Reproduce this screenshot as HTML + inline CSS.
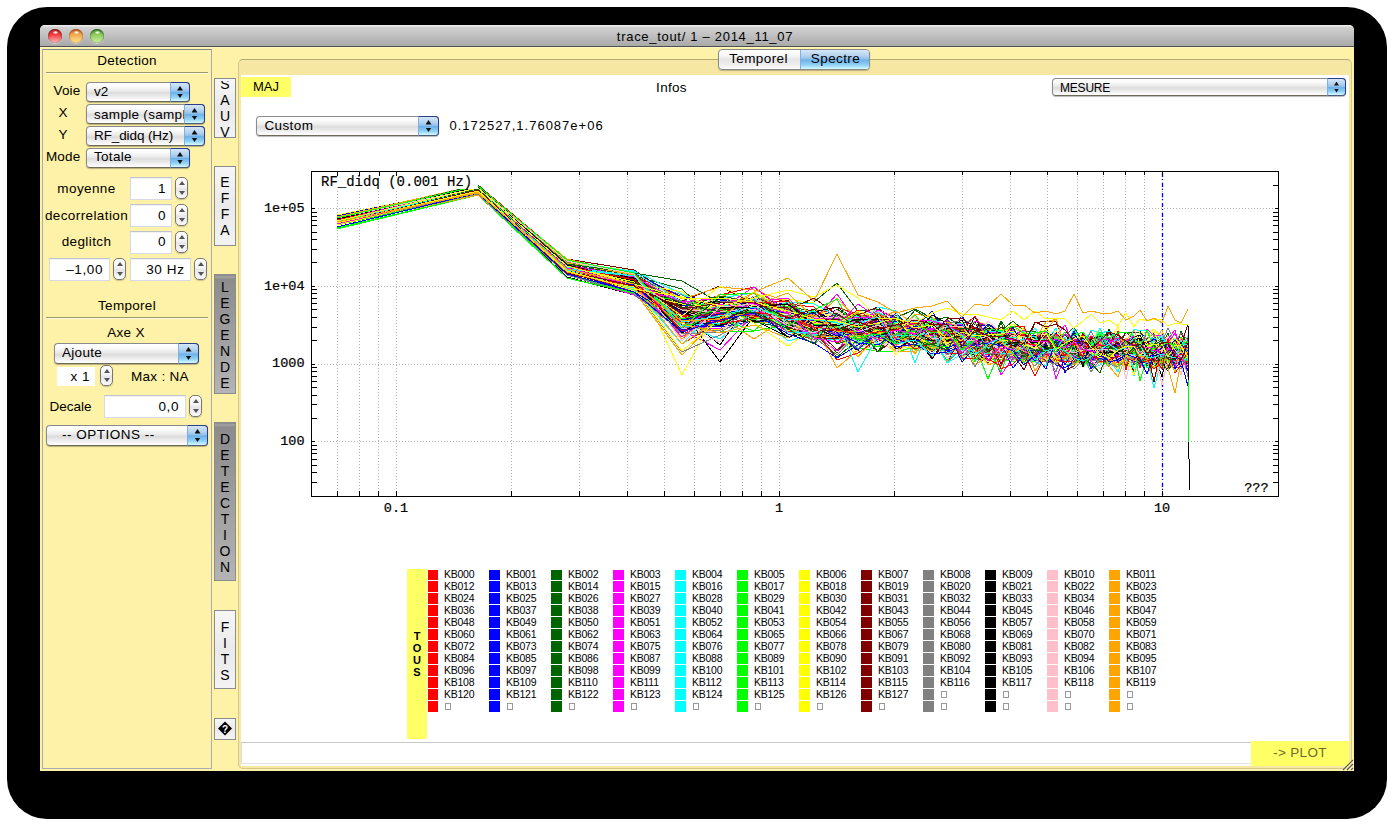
<!DOCTYPE html><html><head><meta charset="utf-8"><style>
*{margin:0;padding:0;box-sizing:border-box}
html,body{width:1394px;height:826px;overflow:hidden;background:#fff;font-family:"Liberation Sans",sans-serif;color:#000}
.a{position:absolute}
.t{position:absolute;white-space:nowrap;line-height:1}
.pop{position:absolute;border:1px solid #8a8a8a;border-bottom-color:#6e6a5a;border-radius:4px;
 background:linear-gradient(#ffffff 0%,#fbfbfb 20%,#e9e9e9 45%,#dcdcdc 55%,#ececec 75%,#ffffff 100%);
 box-shadow:0 1px 1px rgba(0,0,0,.28)}
.bl{position:absolute;top:-1px;right:-1px;bottom:-1px;border:1px solid #2b3e8c;border-bottom-color:#4f5a80;border-left:1px solid #7fb0e0;border-radius:0 4px 4px 0;
 background:linear-gradient(#d6e6f6 0%,#b4d3f0 30%,#8ec0ec 48%,#6cb0e8 52%,#8fd0f6 78%,#d6fbff 100%)}
.bl:before{content:"";position:absolute;left:50%;margin-left:-3px;top:3px;width:6px;height:4.5px;background:#111;clip-path:polygon(50% 0,100% 100%,0 100%)}
.bl:after{content:"";position:absolute;left:50%;margin-left:-3px;bottom:3px;width:6px;height:4.5px;background:#111;clip-path:polygon(0 0,100% 0,50% 100%)}
.sm .bl:before{top:2.5px;width:5px;height:4px;margin-left:-2.5px}
.sm .bl:after{bottom:2.5px;width:5px;height:4px;margin-left:-2.5px}
.tf{position:absolute;background:#fff;border:1px solid #d6dae6;border-top-color:#bfc3ce;box-shadow:inset 0 1px 0 rgba(0,0,0,.05)}
.st{position:absolute;width:13px;border:1px solid #777;border-radius:5px;background:linear-gradient(#fff,#f3f3f3 45%,#e6e6e6 55%,#fafafa);box-shadow:0 1px 1px rgba(0,0,0,.2)}
.st:before{content:"";position:absolute;left:2.5px;top:3px;border-left:3px solid transparent;border-right:3px solid transparent;border-bottom:4px solid #555}
.st:after{content:"";position:absolute;left:2.5px;bottom:3px;border-left:3px solid transparent;border-right:3px solid transparent;border-top:4px solid #555}
.vb{position:absolute;left:214px;width:22px;border:1px solid #8c8c8c;background:linear-gradient(#f6f6f6,#eaeaea 50%,#f3f3f3);overflow:hidden}
.vb.dk{background:linear-gradient(#888 0px,#a4a4a4 2px,#8c8c8c 4px,#969696 30%,#b4b4b4 100%)}
.vl{position:absolute;left:0;width:20px;text-align:center;font-size:14px;line-height:1}
.sw{position:absolute;width:10px;height:11px}
.lb{position:absolute;font-size:10.5px;line-height:1;letter-spacing:-0.25px;white-space:nowrap}
.bx{position:absolute;width:6px;height:7px;border:1px solid #999}
</style></head><body>
<div class="a" style="left:7px;top:7px;width:1380px;height:812px;background:#000;border-radius:40px"></div>
<div class="a" style="left:40px;top:25px;width:1314px;height:746px;background:#fef1a8;border-radius:5px 5px 0 0;overflow:hidden">
<div class="a" style="left:0;top:0;width:1314px;height:21px;background:linear-gradient(#ececec 0px,#ececec 1px,#d2d2d2 2px,#bdbdbd 55%,#a9a9a9 100%)"></div>
<div class="a" style="left:0;top:21px;width:1314px;height:1px;background:#505050"></div>
<div class="a" style="left:0;top:22px;width:1314px;height:1px;background:#fff7c0"></div>
</div>
<div class="a" style="left:48px;top:29px;width:14px;height:14px;border-radius:7px;background:linear-gradient(#b83030 0%,#ef3d3d 40%,#ffbcbc 100%);box-shadow:inset 0 1px 1.5px rgba(110,20,20,.75),inset 0 0 1px rgba(110,20,20,.75),0 1px 1px rgba(255,255,255,.45)"></div>
<div class="a" style="left:52.5px;top:30.5px;width:5px;height:3px;border-radius:50%;background:radial-gradient(ellipse at center,rgba(255,255,255,.95) 0%,rgba(255,255,255,.5) 60%,rgba(255,255,255,0) 100%)"></div>
<div class="a" style="left:69px;top:29px;width:14px;height:14px;border-radius:7px;background:linear-gradient(#c86a20 0%,#f2a850 40%,#ffe88c 100%);box-shadow:inset 0 1px 1.5px rgba(150,60,20,.75),inset 0 0 1px rgba(150,60,20,.75),0 1px 1px rgba(255,255,255,.45)"></div>
<div class="a" style="left:73.5px;top:30.5px;width:5px;height:3px;border-radius:50%;background:radial-gradient(ellipse at center,rgba(255,255,255,.95) 0%,rgba(255,255,255,.5) 60%,rgba(255,255,255,0) 100%)"></div>
<div class="a" style="left:90px;top:29px;width:14px;height:14px;border-radius:7px;background:linear-gradient(#4a8a2a 0%,#8ccc5c 40%,#d2eea0 100%);box-shadow:inset 0 1px 1.5px rgba(40,90,25,.8),inset 0 0 1px rgba(40,90,25,.8),0 1px 1px rgba(255,255,255,.45)"></div>
<div class="a" style="left:94.5px;top:30.5px;width:5px;height:3px;border-radius:50%;background:radial-gradient(ellipse at center,rgba(255,255,255,.95) 0%,rgba(255,255,255,.5) 60%,rgba(255,255,255,0) 100%)"></div>
<div class="t" style="left:555.0px;width:300px;text-align:center;top:30.00px;font-size:13px;letter-spacing:0.7px">trace_tout/ 1 – 2014_11_07</div>
<div class="a" style="left:42px;top:49px;width:170px;height:720px;border:1px solid #aaaab2;border-top-color:#84888e"></div>
<div class="t" style="left:-23.0px;width:300px;text-align:center;top:53.57px;font-size:13.5px;letter-spacing:0.3px">Detection</div>
<div class="a" style="left:46px;top:72px;width:162px;height:1px;background:#a09868"></div>
<div class="a" style="left:46px;top:73px;width:162px;height:1px;background:#fffbe0"></div>
<div class="t" style="left:-219.5px;width:300px;text-align:right;top:84.27px;font-size:13.5px;letter-spacing:0.2px">Voie</div>
<div class="t" style="left:-87.0px;width:300px;text-align:center;top:106.27px;font-size:13.5px;">X</div>
<div class="t" style="left:-87.0px;width:300px;text-align:center;top:127.97px;font-size:13.5px;">Y</div>
<div class="t" style="left:-219.5px;width:300px;text-align:right;top:149.97px;font-size:13.5px;letter-spacing:0.2px">Mode</div>
<div class="pop" style="left:86px;top:82px;width:104px;height:20px"><div class="bl" style="width:20px"></div></div>
<div class="t" style="left:94.0px;top:84.67px;font-size:13.5px;">v2</div>
<div class="pop" style="left:86px;top:104px;width:119px;height:20px"><div class="a" style="left:0;top:0;width:100px;height:18px;overflow:hidden">
<div class="t" style="left:7.0px;top:2.77px;font-size:13.5px;letter-spacing:0.3px">sample (sample)</div>
</div><div class="bl" style="width:21px"></div></div>
<div class="pop" style="left:86px;top:126px;width:119px;height:20px"><div class="bl" style="width:21px"></div></div>
<div class="t" style="left:94.0px;top:128.77px;font-size:13.5px;letter-spacing:-0.1px">RF_didq (Hz)</div>
<div class="pop" style="left:86px;top:148px;width:104px;height:20px"><div class="bl" style="width:20px"></div></div>
<div class="t" style="left:94.0px;top:150.27px;font-size:13.5px;letter-spacing:0.3px">Totale</div>
<div class="t" style="left:-63.5px;width:300px;text-align:center;top:181.87px;font-size:13.5px;letter-spacing:0.4px">moyenne</div>
<div class="tf" style="left:130px;top:177px;width:42px;height:23px"></div>
<div class="t" style="left:-134.5px;width:300px;text-align:right;top:181.87px;font-size:13.5px;">1</div>
<div class="st" style="left:175px;top:177px;height:22px"></div>
<div class="t" style="left:-63.5px;width:300px;text-align:center;top:208.57px;font-size:13.5px;letter-spacing:0.4px">decorrelation</div>
<div class="tf" style="left:130px;top:204px;width:42px;height:23px"></div>
<div class="t" style="left:-134.5px;width:300px;text-align:right;top:208.57px;font-size:13.5px;">0</div>
<div class="st" style="left:175px;top:204px;height:22px"></div>
<div class="t" style="left:-63.5px;width:300px;text-align:center;top:235.37px;font-size:13.5px;letter-spacing:0.4px">deglitch</div>
<div class="tf" style="left:130px;top:231px;width:42px;height:23px"></div>
<div class="t" style="left:-134.5px;width:300px;text-align:right;top:235.37px;font-size:13.5px;">0</div>
<div class="st" style="left:175px;top:231px;height:22px"></div>
<div class="tf" style="left:49px;top:258px;width:61px;height:23px"></div>
<div class="t" style="left:-197.0px;width:300px;text-align:right;top:263.17px;font-size:13.5px;letter-spacing:0.6px">–1,00</div>
<div class="st" style="left:113px;top:258px;height:22px"></div>
<div class="tf" style="left:130px;top:258px;width:61px;height:23px"></div>
<div class="t" style="left:-115.5px;width:300px;text-align:right;top:263.17px;font-size:13.5px;letter-spacing:0.6px">30 Hz</div>
<div class="st" style="left:194px;top:258px;height:22px"></div>
<div class="t" style="left:-23.0px;width:300px;text-align:center;top:298.57px;font-size:13.5px;letter-spacing:0.3px">Temporel</div>
<div class="a" style="left:46px;top:317px;width:162px;height:1px;background:#a09868"></div>
<div class="a" style="left:46px;top:318px;width:162px;height:1px;background:#fffbe0"></div>
<div class="t" style="left:-24.0px;width:300px;text-align:center;top:325.57px;font-size:13.5px;letter-spacing:0.3px">Axe X</div>
<div class="pop" style="left:54px;top:343px;width:145px;height:21px"><div class="bl" style="width:21px"></div></div>
<div class="t" style="left:62.0px;top:346.07px;font-size:13.5px;letter-spacing:0.3px">Ajoute</div>
<div class="a" style="left:57px;top:367px;width:38px;height:19px;background:#fff"></div>
<div class="t" style="left:-210.0px;width:300px;text-align:right;top:369.57px;font-size:13.5px;letter-spacing:0.5px">x 1</div>
<div class="st" style="left:100px;top:365px;height:21px"></div>
<div class="t" style="left:131.0px;top:369.57px;font-size:13.5px;letter-spacing:0.3px">Max : NA</div>
<div class="t" style="left:49.5px;top:399.57px;font-size:13.5px;letter-spacing:0px">Decale</div>
<div class="tf" style="left:104px;top:395px;width:82px;height:23px"></div>
<div class="t" style="left:-121.0px;width:300px;text-align:right;top:399.57px;font-size:13.5px;letter-spacing:0.6px">0,0</div>
<div class="st" style="left:189px;top:395px;height:22px"></div>
<div class="pop" style="left:46px;top:425px;width:162px;height:21px"><div class="bl" style="width:21px"></div></div>
<div class="t" style="left:62.0px;top:428.07px;font-size:13.5px;letter-spacing:0.5px">-- OPTIONS --</div>
<div class="vb" style="top:78px;height:60px"><div class="a" style="left:0;top:2px;width:20px;bottom:0;overflow:hidden">
<div class="vl" style="top:-3.65px">S</div>
<div class="vl" style="top:12.35px">A</div>
<div class="vl" style="top:28.36px">U</div>
<div class="vl" style="top:44.35px">V</div>
</div></div>
<div class="vb" style="top:166px;height:80px"><div class="a" style="left:0;top:2px;width:20px;bottom:0;overflow:hidden">
<div class="vl" style="top:6.35px">E</div>
<div class="vl" style="top:22.36px">F</div>
<div class="vl" style="top:38.35px">F</div>
<div class="vl" style="top:54.35px">A</div>
</div></div>
<div class="vb dk" style="top:274px;height:120px"><div class="a" style="left:0;top:2px;width:20px;bottom:0;overflow:hidden">
<div class="vl" style="top:2.85px">L</div>
<div class="vl" style="top:18.86px">E</div>
<div class="vl" style="top:34.85px">G</div>
<div class="vl" style="top:50.85px">E</div>
<div class="vl" style="top:66.86px">N</div>
<div class="vl" style="top:82.86px">D</div>
<div class="vl" style="top:98.86px">E</div>
</div></div>
<div class="vb dk" style="top:422px;height:159px"><div class="a" style="left:0;top:2px;width:20px;bottom:0;overflow:hidden">
<div class="vl" style="top:7.35px">D</div>
<div class="vl" style="top:23.36px">E</div>
<div class="vl" style="top:39.35px">T</div>
<div class="vl" style="top:55.35px">E</div>
<div class="vl" style="top:71.36px">C</div>
<div class="vl" style="top:87.36px">T</div>
<div class="vl" style="top:103.36px">I</div>
<div class="vl" style="top:119.36px">O</div>
<div class="vl" style="top:135.35px">N</div>
</div></div>
<div class="vb" style="top:610px;height:79px"><div class="a" style="left:0;top:2px;width:20px;bottom:0;overflow:hidden">
<div class="vl" style="top:7.35px">F</div>
<div class="vl" style="top:23.36px">I</div>
<div class="vl" style="top:39.35px">T</div>
<div class="vl" style="top:55.35px">S</div>
</div></div>
<div class="vb" style="top:718px;height:22px"></div>
<svg class="a" style="left:216px;top:720px" width="18" height="18" viewBox="0 0 18 18"><path d="M9 1.5 L16 8.5 L9 15.5 L2 8.5 Z" fill="#000"/><text x="9" y="12.7" font-size="10" font-weight="bold" text-anchor="middle" fill="#fff" font-family="Liberation Sans">?</text></svg>
<div class="a" style="left:238px;top:59px;width:1114px;height:710px;border:1px solid #d4c888;border-top-color:#b3a976;border-radius:5px;background:#f6e8a2"></div>
<div class="a" style="left:241px;top:75px;width:1108px;height:691px;background:#fff"></div>
<div class="a" style="left:718px;top:49px;width:152px;height:21px;border:1px solid #8a8a8a;border-radius:4px;overflow:hidden;box-shadow:0 1px 1px rgba(0,0,0,.25);background:linear-gradient(#fff 0%,#f8f8f8 25%,#e6e6e6 50%,#ededed 75%,#fff 100%)">
<div class="a" style="left:81px;top:-1px;width:71px;height:21px;border:1px solid #2b3e8c;border-left-color:#7fb0e0;border-radius:0 4px 4px 0;background:linear-gradient(#d6e6f6 0%,#b4d3f0 30%,#8ec0ec 48%,#6cb0e8 52%,#8fd0f6 78%,#d6fbff 100%)"></div>
</div>
<div class="t" style="left:608.5px;width:300px;text-align:center;top:52.07px;font-size:13.5px;letter-spacing:0.4px">Temporel</div>
<div class="t" style="left:685.5px;width:300px;text-align:center;top:52.07px;font-size:13.5px;letter-spacing:0.4px">Spectre</div>
<div class="a" style="left:241px;top:77px;width:50px;height:20px;background:#ffff66"></div>
<div class="t" style="left:116.0px;width:300px;text-align:center;top:80.40px;font-size:13px;letter-spacing:0px">MAJ</div>
<div class="t" style="left:521.5px;width:300px;text-align:center;top:80.57px;font-size:13.5px;letter-spacing:0.3px">Infos</div>
<div class="pop sm" style="left:1052px;top:78px;width:294px;height:18px"><div class="bl" style="width:19px"></div></div>
<div class="t" style="left:1060.0px;top:81.64px;font-size:12px;letter-spacing:-0.2px">MESURE</div>
<div class="pop" style="left:256px;top:116px;width:183px;height:20px"><div class="bl" style="width:21px"></div></div>
<div class="t" style="left:264.4px;top:119.37px;font-size:13.5px;letter-spacing:0.4px">Custom</div>
<div class="t" style="left:449.5px;top:118.70px;font-size:13px;letter-spacing:1.0px">0.172527,1.76087e+06</div>
<div class="a" style="left:241px;top:742px;width:1010px;height:22px;border-top:1px solid #c8c8c8;border-left:1px solid #dcdce0;border-bottom:1px solid #e6e6e6"></div>
<div class="a" style="left:1251px;top:741px;width:98px;height:25px;background:#ffff66"></div>
<div class="t" style="left:1150.0px;width:300px;text-align:center;top:746.47px;font-size:13.5px;color:#6f6a2a;letter-spacing:0.3px">-&gt; PLOT</div>
<svg class="a" style="left:1340px;top:757px" width="14" height="14"><path d="M3.5 13.5 L13.5 3.5 M7.5 13.5 L13.5 7.5 M11.5 13.5 L13.5 11.5" stroke="#fffbd8" stroke-width="1.2"/><path d="M3 13 L13 3 M7 13 L13 7 M11 13 L13 11" stroke="#5a5648" stroke-width="1.1"/></svg>
<div class="a" style="left:407px;top:569px;width:20px;height:170px;background:#ffff66"></div>
<div class="t" style="left:407px;width:20px;text-align:center;top:630.7px;font-size:11px;font-weight:bold;top:630.61px">T</div>
<div class="t" style="left:407px;width:20px;text-align:center;top:630.7px;font-size:11px;font-weight:bold;top:642.61px">O</div>
<div class="t" style="left:407px;width:20px;text-align:center;top:630.7px;font-size:11px;font-weight:bold;top:654.61px">U</div>
<div class="t" style="left:407px;width:20px;text-align:center;top:630.7px;font-size:11px;font-weight:bold;top:666.61px">S</div>
<div class="sw" style="left:428px;top:570px;width:10px;height:10px;background:#ff0000"></div>
<div class="lb" style="left:444px;top:569.01px">KB000</div>
<div class="sw" style="left:428px;top:581px;width:10px;height:11px;background:#ff0000"></div>
<div class="lb" style="left:444px;top:581.01px">KB012</div>
<div class="sw" style="left:428px;top:593px;width:10px;height:11px;background:#ff0000"></div>
<div class="lb" style="left:444px;top:593.01px">KB024</div>
<div class="sw" style="left:428px;top:605px;width:10px;height:11px;background:#ff0000"></div>
<div class="lb" style="left:444px;top:605.01px">KB036</div>
<div class="sw" style="left:428px;top:617px;width:10px;height:11px;background:#ff0000"></div>
<div class="lb" style="left:444px;top:617.01px">KB048</div>
<div class="sw" style="left:428px;top:629px;width:10px;height:11px;background:#ff0000"></div>
<div class="lb" style="left:444px;top:629.01px">KB060</div>
<div class="sw" style="left:428px;top:641px;width:10px;height:11px;background:#ff0000"></div>
<div class="lb" style="left:444px;top:641.01px">KB072</div>
<div class="sw" style="left:428px;top:653px;width:10px;height:11px;background:#ff0000"></div>
<div class="lb" style="left:444px;top:653.01px">KB084</div>
<div class="sw" style="left:428px;top:665px;width:10px;height:11px;background:#ff0000"></div>
<div class="lb" style="left:444px;top:665.01px">KB096</div>
<div class="sw" style="left:428px;top:677px;width:10px;height:11px;background:#ff0000"></div>
<div class="lb" style="left:444px;top:677.01px">KB108</div>
<div class="sw" style="left:428px;top:689px;width:10px;height:11px;background:#ff0000"></div>
<div class="lb" style="left:444px;top:689.01px">KB120</div>
<div class="sw" style="left:428px;top:701px;width:10px;height:11px;background:#ff0000"></div>
<div class="bx" style="left:445px;top:703px"></div>
<div class="sw" style="left:489px;top:570px;width:11px;height:10px;background:#0000ff"></div>
<div class="lb" style="left:506px;top:569.01px">KB001</div>
<div class="sw" style="left:489px;top:581px;width:11px;height:11px;background:#0000ff"></div>
<div class="lb" style="left:506px;top:581.01px">KB013</div>
<div class="sw" style="left:489px;top:593px;width:11px;height:11px;background:#0000ff"></div>
<div class="lb" style="left:506px;top:593.01px">KB025</div>
<div class="sw" style="left:489px;top:605px;width:11px;height:11px;background:#0000ff"></div>
<div class="lb" style="left:506px;top:605.01px">KB037</div>
<div class="sw" style="left:489px;top:617px;width:11px;height:11px;background:#0000ff"></div>
<div class="lb" style="left:506px;top:617.01px">KB049</div>
<div class="sw" style="left:489px;top:629px;width:11px;height:11px;background:#0000ff"></div>
<div class="lb" style="left:506px;top:629.01px">KB061</div>
<div class="sw" style="left:489px;top:641px;width:11px;height:11px;background:#0000ff"></div>
<div class="lb" style="left:506px;top:641.01px">KB073</div>
<div class="sw" style="left:489px;top:653px;width:11px;height:11px;background:#0000ff"></div>
<div class="lb" style="left:506px;top:653.01px">KB085</div>
<div class="sw" style="left:489px;top:665px;width:11px;height:11px;background:#0000ff"></div>
<div class="lb" style="left:506px;top:665.01px">KB097</div>
<div class="sw" style="left:489px;top:677px;width:11px;height:11px;background:#0000ff"></div>
<div class="lb" style="left:506px;top:677.01px">KB109</div>
<div class="sw" style="left:489px;top:689px;width:11px;height:11px;background:#0000ff"></div>
<div class="lb" style="left:506px;top:689.01px">KB121</div>
<div class="sw" style="left:489px;top:701px;width:11px;height:11px;background:#0000ff"></div>
<div class="bx" style="left:507px;top:703px"></div>
<div class="sw" style="left:551px;top:570px;width:11px;height:10px;background:#006400"></div>
<div class="lb" style="left:568px;top:569.01px">KB002</div>
<div class="sw" style="left:551px;top:581px;width:11px;height:11px;background:#006400"></div>
<div class="lb" style="left:568px;top:581.01px">KB014</div>
<div class="sw" style="left:551px;top:593px;width:11px;height:11px;background:#006400"></div>
<div class="lb" style="left:568px;top:593.01px">KB026</div>
<div class="sw" style="left:551px;top:605px;width:11px;height:11px;background:#006400"></div>
<div class="lb" style="left:568px;top:605.01px">KB038</div>
<div class="sw" style="left:551px;top:617px;width:11px;height:11px;background:#006400"></div>
<div class="lb" style="left:568px;top:617.01px">KB050</div>
<div class="sw" style="left:551px;top:629px;width:11px;height:11px;background:#006400"></div>
<div class="lb" style="left:568px;top:629.01px">KB062</div>
<div class="sw" style="left:551px;top:641px;width:11px;height:11px;background:#006400"></div>
<div class="lb" style="left:568px;top:641.01px">KB074</div>
<div class="sw" style="left:551px;top:653px;width:11px;height:11px;background:#006400"></div>
<div class="lb" style="left:568px;top:653.01px">KB086</div>
<div class="sw" style="left:551px;top:665px;width:11px;height:11px;background:#006400"></div>
<div class="lb" style="left:568px;top:665.01px">KB098</div>
<div class="sw" style="left:551px;top:677px;width:11px;height:11px;background:#006400"></div>
<div class="lb" style="left:568px;top:677.01px">KB110</div>
<div class="sw" style="left:551px;top:689px;width:11px;height:11px;background:#006400"></div>
<div class="lb" style="left:568px;top:689.01px">KB122</div>
<div class="sw" style="left:551px;top:701px;width:11px;height:11px;background:#006400"></div>
<div class="bx" style="left:569px;top:703px"></div>
<div class="sw" style="left:613px;top:570px;width:11px;height:10px;background:#ff00ff"></div>
<div class="lb" style="left:630px;top:569.01px">KB003</div>
<div class="sw" style="left:613px;top:581px;width:11px;height:11px;background:#ff00ff"></div>
<div class="lb" style="left:630px;top:581.01px">KB015</div>
<div class="sw" style="left:613px;top:593px;width:11px;height:11px;background:#ff00ff"></div>
<div class="lb" style="left:630px;top:593.01px">KB027</div>
<div class="sw" style="left:613px;top:605px;width:11px;height:11px;background:#ff00ff"></div>
<div class="lb" style="left:630px;top:605.01px">KB039</div>
<div class="sw" style="left:613px;top:617px;width:11px;height:11px;background:#ff00ff"></div>
<div class="lb" style="left:630px;top:617.01px">KB051</div>
<div class="sw" style="left:613px;top:629px;width:11px;height:11px;background:#ff00ff"></div>
<div class="lb" style="left:630px;top:629.01px">KB063</div>
<div class="sw" style="left:613px;top:641px;width:11px;height:11px;background:#ff00ff"></div>
<div class="lb" style="left:630px;top:641.01px">KB075</div>
<div class="sw" style="left:613px;top:653px;width:11px;height:11px;background:#ff00ff"></div>
<div class="lb" style="left:630px;top:653.01px">KB087</div>
<div class="sw" style="left:613px;top:665px;width:11px;height:11px;background:#ff00ff"></div>
<div class="lb" style="left:630px;top:665.01px">KB099</div>
<div class="sw" style="left:613px;top:677px;width:11px;height:11px;background:#ff00ff"></div>
<div class="lb" style="left:630px;top:677.01px">KB111</div>
<div class="sw" style="left:613px;top:689px;width:11px;height:11px;background:#ff00ff"></div>
<div class="lb" style="left:630px;top:689.01px">KB123</div>
<div class="sw" style="left:613px;top:701px;width:11px;height:11px;background:#ff00ff"></div>
<div class="bx" style="left:631px;top:703px"></div>
<div class="sw" style="left:675px;top:570px;width:11px;height:10px;background:#00ffff"></div>
<div class="lb" style="left:692px;top:569.01px">KB004</div>
<div class="sw" style="left:675px;top:581px;width:11px;height:11px;background:#00ffff"></div>
<div class="lb" style="left:692px;top:581.01px">KB016</div>
<div class="sw" style="left:675px;top:593px;width:11px;height:11px;background:#00ffff"></div>
<div class="lb" style="left:692px;top:593.01px">KB028</div>
<div class="sw" style="left:675px;top:605px;width:11px;height:11px;background:#00ffff"></div>
<div class="lb" style="left:692px;top:605.01px">KB040</div>
<div class="sw" style="left:675px;top:617px;width:11px;height:11px;background:#00ffff"></div>
<div class="lb" style="left:692px;top:617.01px">KB052</div>
<div class="sw" style="left:675px;top:629px;width:11px;height:11px;background:#00ffff"></div>
<div class="lb" style="left:692px;top:629.01px">KB064</div>
<div class="sw" style="left:675px;top:641px;width:11px;height:11px;background:#00ffff"></div>
<div class="lb" style="left:692px;top:641.01px">KB076</div>
<div class="sw" style="left:675px;top:653px;width:11px;height:11px;background:#00ffff"></div>
<div class="lb" style="left:692px;top:653.01px">KB088</div>
<div class="sw" style="left:675px;top:665px;width:11px;height:11px;background:#00ffff"></div>
<div class="lb" style="left:692px;top:665.01px">KB100</div>
<div class="sw" style="left:675px;top:677px;width:11px;height:11px;background:#00ffff"></div>
<div class="lb" style="left:692px;top:677.01px">KB112</div>
<div class="sw" style="left:675px;top:689px;width:11px;height:11px;background:#00ffff"></div>
<div class="lb" style="left:692px;top:689.01px">KB124</div>
<div class="sw" style="left:675px;top:701px;width:11px;height:11px;background:#00ffff"></div>
<div class="bx" style="left:693px;top:703px"></div>
<div class="sw" style="left:737px;top:570px;width:11px;height:10px;background:#00ff00"></div>
<div class="lb" style="left:754px;top:569.01px">KB005</div>
<div class="sw" style="left:737px;top:581px;width:11px;height:11px;background:#00ff00"></div>
<div class="lb" style="left:754px;top:581.01px">KB017</div>
<div class="sw" style="left:737px;top:593px;width:11px;height:11px;background:#00ff00"></div>
<div class="lb" style="left:754px;top:593.01px">KB029</div>
<div class="sw" style="left:737px;top:605px;width:11px;height:11px;background:#00ff00"></div>
<div class="lb" style="left:754px;top:605.01px">KB041</div>
<div class="sw" style="left:737px;top:617px;width:11px;height:11px;background:#00ff00"></div>
<div class="lb" style="left:754px;top:617.01px">KB053</div>
<div class="sw" style="left:737px;top:629px;width:11px;height:11px;background:#00ff00"></div>
<div class="lb" style="left:754px;top:629.01px">KB065</div>
<div class="sw" style="left:737px;top:641px;width:11px;height:11px;background:#00ff00"></div>
<div class="lb" style="left:754px;top:641.01px">KB077</div>
<div class="sw" style="left:737px;top:653px;width:11px;height:11px;background:#00ff00"></div>
<div class="lb" style="left:754px;top:653.01px">KB089</div>
<div class="sw" style="left:737px;top:665px;width:11px;height:11px;background:#00ff00"></div>
<div class="lb" style="left:754px;top:665.01px">KB101</div>
<div class="sw" style="left:737px;top:677px;width:11px;height:11px;background:#00ff00"></div>
<div class="lb" style="left:754px;top:677.01px">KB113</div>
<div class="sw" style="left:737px;top:689px;width:11px;height:11px;background:#00ff00"></div>
<div class="lb" style="left:754px;top:689.01px">KB125</div>
<div class="sw" style="left:737px;top:701px;width:11px;height:11px;background:#00ff00"></div>
<div class="bx" style="left:755px;top:703px"></div>
<div class="sw" style="left:799px;top:570px;width:11px;height:10px;background:#ffff00"></div>
<div class="lb" style="left:816px;top:569.01px">KB006</div>
<div class="sw" style="left:799px;top:581px;width:11px;height:11px;background:#ffff00"></div>
<div class="lb" style="left:816px;top:581.01px">KB018</div>
<div class="sw" style="left:799px;top:593px;width:11px;height:11px;background:#ffff00"></div>
<div class="lb" style="left:816px;top:593.01px">KB030</div>
<div class="sw" style="left:799px;top:605px;width:11px;height:11px;background:#ffff00"></div>
<div class="lb" style="left:816px;top:605.01px">KB042</div>
<div class="sw" style="left:799px;top:617px;width:11px;height:11px;background:#ffff00"></div>
<div class="lb" style="left:816px;top:617.01px">KB054</div>
<div class="sw" style="left:799px;top:629px;width:11px;height:11px;background:#ffff00"></div>
<div class="lb" style="left:816px;top:629.01px">KB066</div>
<div class="sw" style="left:799px;top:641px;width:11px;height:11px;background:#ffff00"></div>
<div class="lb" style="left:816px;top:641.01px">KB078</div>
<div class="sw" style="left:799px;top:653px;width:11px;height:11px;background:#ffff00"></div>
<div class="lb" style="left:816px;top:653.01px">KB090</div>
<div class="sw" style="left:799px;top:665px;width:11px;height:11px;background:#ffff00"></div>
<div class="lb" style="left:816px;top:665.01px">KB102</div>
<div class="sw" style="left:799px;top:677px;width:11px;height:11px;background:#ffff00"></div>
<div class="lb" style="left:816px;top:677.01px">KB114</div>
<div class="sw" style="left:799px;top:689px;width:11px;height:11px;background:#ffff00"></div>
<div class="lb" style="left:816px;top:689.01px">KB126</div>
<div class="sw" style="left:799px;top:701px;width:11px;height:11px;background:#ffff00"></div>
<div class="bx" style="left:817px;top:703px"></div>
<div class="sw" style="left:861px;top:570px;width:11px;height:10px;background:#800000"></div>
<div class="lb" style="left:878px;top:569.01px">KB007</div>
<div class="sw" style="left:861px;top:581px;width:11px;height:11px;background:#800000"></div>
<div class="lb" style="left:878px;top:581.01px">KB019</div>
<div class="sw" style="left:861px;top:593px;width:11px;height:11px;background:#800000"></div>
<div class="lb" style="left:878px;top:593.01px">KB031</div>
<div class="sw" style="left:861px;top:605px;width:11px;height:11px;background:#800000"></div>
<div class="lb" style="left:878px;top:605.01px">KB043</div>
<div class="sw" style="left:861px;top:617px;width:11px;height:11px;background:#800000"></div>
<div class="lb" style="left:878px;top:617.01px">KB055</div>
<div class="sw" style="left:861px;top:629px;width:11px;height:11px;background:#800000"></div>
<div class="lb" style="left:878px;top:629.01px">KB067</div>
<div class="sw" style="left:861px;top:641px;width:11px;height:11px;background:#800000"></div>
<div class="lb" style="left:878px;top:641.01px">KB079</div>
<div class="sw" style="left:861px;top:653px;width:11px;height:11px;background:#800000"></div>
<div class="lb" style="left:878px;top:653.01px">KB091</div>
<div class="sw" style="left:861px;top:665px;width:11px;height:11px;background:#800000"></div>
<div class="lb" style="left:878px;top:665.01px">KB103</div>
<div class="sw" style="left:861px;top:677px;width:11px;height:11px;background:#800000"></div>
<div class="lb" style="left:878px;top:677.01px">KB115</div>
<div class="sw" style="left:861px;top:689px;width:11px;height:11px;background:#800000"></div>
<div class="lb" style="left:878px;top:689.01px">KB127</div>
<div class="sw" style="left:861px;top:701px;width:11px;height:11px;background:#800000"></div>
<div class="bx" style="left:879px;top:703px"></div>
<div class="sw" style="left:923px;top:570px;width:11px;height:10px;background:#808080"></div>
<div class="lb" style="left:940px;top:569.01px">KB008</div>
<div class="sw" style="left:923px;top:581px;width:11px;height:11px;background:#808080"></div>
<div class="lb" style="left:940px;top:581.01px">KB020</div>
<div class="sw" style="left:923px;top:593px;width:11px;height:11px;background:#808080"></div>
<div class="lb" style="left:940px;top:593.01px">KB032</div>
<div class="sw" style="left:923px;top:605px;width:11px;height:11px;background:#808080"></div>
<div class="lb" style="left:940px;top:605.01px">KB044</div>
<div class="sw" style="left:923px;top:617px;width:11px;height:11px;background:#808080"></div>
<div class="lb" style="left:940px;top:617.01px">KB056</div>
<div class="sw" style="left:923px;top:629px;width:11px;height:11px;background:#808080"></div>
<div class="lb" style="left:940px;top:629.01px">KB068</div>
<div class="sw" style="left:923px;top:641px;width:11px;height:11px;background:#808080"></div>
<div class="lb" style="left:940px;top:641.01px">KB080</div>
<div class="sw" style="left:923px;top:653px;width:11px;height:11px;background:#808080"></div>
<div class="lb" style="left:940px;top:653.01px">KB092</div>
<div class="sw" style="left:923px;top:665px;width:11px;height:11px;background:#808080"></div>
<div class="lb" style="left:940px;top:665.01px">KB104</div>
<div class="sw" style="left:923px;top:677px;width:11px;height:11px;background:#808080"></div>
<div class="lb" style="left:940px;top:677.01px">KB116</div>
<div class="sw" style="left:923px;top:689px;width:11px;height:11px;background:#808080"></div>
<div class="bx" style="left:941px;top:691px"></div>
<div class="sw" style="left:923px;top:701px;width:11px;height:11px;background:#808080"></div>
<div class="bx" style="left:941px;top:703px"></div>
<div class="sw" style="left:985px;top:570px;width:11px;height:10px;background:#000000"></div>
<div class="lb" style="left:1002px;top:569.01px">KB009</div>
<div class="sw" style="left:985px;top:581px;width:11px;height:11px;background:#000000"></div>
<div class="lb" style="left:1002px;top:581.01px">KB021</div>
<div class="sw" style="left:985px;top:593px;width:11px;height:11px;background:#000000"></div>
<div class="lb" style="left:1002px;top:593.01px">KB033</div>
<div class="sw" style="left:985px;top:605px;width:11px;height:11px;background:#000000"></div>
<div class="lb" style="left:1002px;top:605.01px">KB045</div>
<div class="sw" style="left:985px;top:617px;width:11px;height:11px;background:#000000"></div>
<div class="lb" style="left:1002px;top:617.01px">KB057</div>
<div class="sw" style="left:985px;top:629px;width:11px;height:11px;background:#000000"></div>
<div class="lb" style="left:1002px;top:629.01px">KB069</div>
<div class="sw" style="left:985px;top:641px;width:11px;height:11px;background:#000000"></div>
<div class="lb" style="left:1002px;top:641.01px">KB081</div>
<div class="sw" style="left:985px;top:653px;width:11px;height:11px;background:#000000"></div>
<div class="lb" style="left:1002px;top:653.01px">KB093</div>
<div class="sw" style="left:985px;top:665px;width:11px;height:11px;background:#000000"></div>
<div class="lb" style="left:1002px;top:665.01px">KB105</div>
<div class="sw" style="left:985px;top:677px;width:11px;height:11px;background:#000000"></div>
<div class="lb" style="left:1002px;top:677.01px">KB117</div>
<div class="sw" style="left:985px;top:689px;width:11px;height:11px;background:#000000"></div>
<div class="bx" style="left:1003px;top:691px"></div>
<div class="sw" style="left:985px;top:701px;width:11px;height:11px;background:#000000"></div>
<div class="bx" style="left:1003px;top:703px"></div>
<div class="sw" style="left:1047px;top:570px;width:11px;height:10px;background:#ffc0cb"></div>
<div class="lb" style="left:1064px;top:569.01px">KB010</div>
<div class="sw" style="left:1047px;top:581px;width:11px;height:11px;background:#ffc0cb"></div>
<div class="lb" style="left:1064px;top:581.01px">KB022</div>
<div class="sw" style="left:1047px;top:593px;width:11px;height:11px;background:#ffc0cb"></div>
<div class="lb" style="left:1064px;top:593.01px">KB034</div>
<div class="sw" style="left:1047px;top:605px;width:11px;height:11px;background:#ffc0cb"></div>
<div class="lb" style="left:1064px;top:605.01px">KB046</div>
<div class="sw" style="left:1047px;top:617px;width:11px;height:11px;background:#ffc0cb"></div>
<div class="lb" style="left:1064px;top:617.01px">KB058</div>
<div class="sw" style="left:1047px;top:629px;width:11px;height:11px;background:#ffc0cb"></div>
<div class="lb" style="left:1064px;top:629.01px">KB070</div>
<div class="sw" style="left:1047px;top:641px;width:11px;height:11px;background:#ffc0cb"></div>
<div class="lb" style="left:1064px;top:641.01px">KB082</div>
<div class="sw" style="left:1047px;top:653px;width:11px;height:11px;background:#ffc0cb"></div>
<div class="lb" style="left:1064px;top:653.01px">KB094</div>
<div class="sw" style="left:1047px;top:665px;width:11px;height:11px;background:#ffc0cb"></div>
<div class="lb" style="left:1064px;top:665.01px">KB106</div>
<div class="sw" style="left:1047px;top:677px;width:11px;height:11px;background:#ffc0cb"></div>
<div class="lb" style="left:1064px;top:677.01px">KB118</div>
<div class="sw" style="left:1047px;top:689px;width:11px;height:11px;background:#ffc0cb"></div>
<div class="bx" style="left:1065px;top:691px"></div>
<div class="sw" style="left:1047px;top:701px;width:11px;height:11px;background:#ffc0cb"></div>
<div class="bx" style="left:1065px;top:703px"></div>
<div class="sw" style="left:1109px;top:570px;width:11px;height:10px;background:#ffa500"></div>
<div class="lb" style="left:1126px;top:569.01px">KB011</div>
<div class="sw" style="left:1109px;top:581px;width:11px;height:11px;background:#ffa500"></div>
<div class="lb" style="left:1126px;top:581.01px">KB023</div>
<div class="sw" style="left:1109px;top:593px;width:11px;height:11px;background:#ffa500"></div>
<div class="lb" style="left:1126px;top:593.01px">KB035</div>
<div class="sw" style="left:1109px;top:605px;width:11px;height:11px;background:#ffa500"></div>
<div class="lb" style="left:1126px;top:605.01px">KB047</div>
<div class="sw" style="left:1109px;top:617px;width:11px;height:11px;background:#ffa500"></div>
<div class="lb" style="left:1126px;top:617.01px">KB059</div>
<div class="sw" style="left:1109px;top:629px;width:11px;height:11px;background:#ffa500"></div>
<div class="lb" style="left:1126px;top:629.01px">KB071</div>
<div class="sw" style="left:1109px;top:641px;width:11px;height:11px;background:#ffa500"></div>
<div class="lb" style="left:1126px;top:641.01px">KB083</div>
<div class="sw" style="left:1109px;top:653px;width:11px;height:11px;background:#ffa500"></div>
<div class="lb" style="left:1126px;top:653.01px">KB095</div>
<div class="sw" style="left:1109px;top:665px;width:11px;height:11px;background:#ffa500"></div>
<div class="lb" style="left:1126px;top:665.01px">KB107</div>
<div class="sw" style="left:1109px;top:677px;width:11px;height:11px;background:#ffa500"></div>
<div class="lb" style="left:1126px;top:677.01px">KB119</div>
<div class="sw" style="left:1109px;top:689px;width:11px;height:11px;background:#ffa500"></div>
<div class="bx" style="left:1127px;top:691px"></div>
<div class="sw" style="left:1109px;top:701px;width:11px;height:11px;background:#ffa500"></div>
<div class="bx" style="left:1127px;top:703px"></div>
<svg class="a" style="left:0;top:0" width="1394" height="826"><path d="M337.5 176V491M359.5 176V491M378.5 176V491M396.5 176V491M511.5 176V491M579.5 176V491M627.5 176V491M664.5 176V491M694.5 176V491M720.5 176V491M742.5 176V491M761.5 176V491M779.5 176V491M894.5 176V491M962.5 176V491M1010.5 176V491M1047.5 176V491M1077.5 176V491M1103.5 176V491M1125.5 176V491M1144.5 176V491M1162.5 176V491" stroke="#b0b0b0" stroke-width="1" stroke-dasharray="1 2" fill="none" shape-rendering="crispEdges"/><path d="M318 441.5H1273M318 364.5H1273M318 286.5H1273M318 208.5H1273" stroke="#b0b0b0" stroke-width="1" stroke-dasharray="1 2" fill="none" shape-rendering="crispEdges"/><path d="M1162.5 173V495" stroke="#0000ff" stroke-width="1.3" stroke-dasharray="4 2 1 3" fill="none"/><polyline points="337,222 478,191 567,269 634,284 682,344 720,321 754,321 788,323 814,329 837,329 858,322 878,334 896,338 915,328 932,348 947,335 962,340 975,328 988,330 1001,355 1013,353 1024,355 1035,348 1046,349 1056,348 1065,361 1074,347 1083,340 1091,353 1100,351 1109,362 1118,350 1126,360 1134,348 1140,368 1147,340 1154,353 1162,359 1168,358 1175,356 1181,356 1188,352" stroke="#ff0000" stroke-width="1" fill="none" shape-rendering="crispEdges"/><polyline points="337,217 478,186 567,261 634,273 682,315 720,317 754,315 788,316 814,328 837,317 858,317 878,316 896,336 915,325 932,331 947,339 962,332 975,334 988,347 1001,339 1013,333 1024,334 1035,359 1046,331 1056,343 1065,351 1074,339 1083,348 1091,342 1100,350 1109,334 1118,340 1126,347 1134,341 1140,345 1147,343 1154,350 1162,340 1168,342 1175,355 1181,347 1188,350" stroke="#0000ff" stroke-width="1" fill="none" shape-rendering="crispEdges"/><polyline points="337,224 478,192 567,273 634,285 682,314 720,299 754,302 788,305 814,302 837,283 858,311 878,309 896,318 915,309 932,318 947,322 962,322 975,325 988,324 1001,331 1013,321 1024,331 1035,331 1046,342 1056,333 1065,336 1074,327 1083,343 1091,349 1100,340 1109,341 1118,344 1126,332 1134,332 1140,332 1147,343 1154,339 1162,346 1168,333 1175,352 1181,331 1188,345" stroke="#006400" stroke-width="1" fill="none" shape-rendering="crispEdges"/><polyline points="337,219 478,187 567,265 634,280 682,330 720,350 754,314 788,322 814,331 837,322 858,325 878,337 896,323 915,343 932,325 947,337 962,326 975,350 988,355 1001,338 1013,357 1024,358 1035,352 1046,340 1056,379 1065,356 1074,354 1083,353 1091,365 1100,354 1109,346 1118,341 1126,353 1134,351 1140,353 1147,350 1154,359 1162,356 1168,354 1175,359 1181,355 1188,348" stroke="#ff00ff" stroke-width="1" fill="none" shape-rendering="crispEdges"/><polyline points="337,221 478,189 567,268 634,280 682,319 720,310 754,305 788,311 814,332 837,326 858,342 878,327 896,337 915,342 932,335 947,345 962,337 975,354 988,338 1001,358 1013,350 1024,353 1035,362 1046,366 1056,337 1065,353 1074,339 1083,352 1091,349 1100,334 1109,353 1118,362 1126,355 1134,348 1140,357 1147,362 1154,353 1162,366 1168,353 1175,351 1181,352 1188,360" stroke="#00ffff" stroke-width="1" fill="none" shape-rendering="crispEdges"/><polyline points="337,224 478,193 567,274 634,292 682,330 720,313 754,308 788,331 814,332 837,327 858,335 878,318 896,325 915,323 932,350 947,336 962,333 975,343 988,339 1001,343 1013,353 1024,362 1035,353 1046,348 1056,343 1065,345 1074,349 1083,355 1091,351 1100,343 1109,351 1118,359 1126,347 1134,352 1140,349 1147,359 1154,346 1162,364 1168,356 1175,356 1181,356 1188,358" stroke="#00ff00" stroke-width="1" fill="none" shape-rendering="crispEdges"/><polyline points="337,221 478,190 567,267 634,282 682,319 720,308 754,298 788,313 814,317 837,325 858,330 878,351 896,326 915,326 932,352 947,336 962,329 975,336 988,338 1001,340 1013,341 1024,333 1035,342 1046,348 1056,341 1065,346 1074,343 1083,343 1091,345 1100,346 1109,348 1118,342 1126,350 1134,331 1140,343 1147,355 1154,343 1162,359 1168,342 1175,356 1181,347 1188,337" stroke="#800000" stroke-width="1" fill="none" shape-rendering="crispEdges"/><polyline points="337,224 478,192 567,273 634,287 682,316 720,319 754,306 788,309 814,326 837,325 858,328 878,327 896,321 915,320 932,347 947,329 962,346 975,344 988,338 1001,341 1013,344 1024,348 1035,346 1046,347 1056,349 1065,357 1074,339 1083,341 1091,350 1100,352 1109,367 1118,352 1126,357 1134,354 1140,343 1147,344 1154,346 1162,359 1168,356 1175,344 1181,345 1188,350" stroke="#808080" stroke-width="1" fill="none" shape-rendering="crispEdges"/><polyline points="337,221 478,189 567,266 634,278 682,311 720,362 754,316 788,319 814,330 837,335 858,351 878,314 896,326 915,334 932,347 947,336 962,360 975,342 988,345 1001,348 1013,336 1024,347 1035,348 1046,357 1056,350 1065,345 1074,348 1083,352 1091,346 1100,334 1109,349 1118,355 1126,344 1134,351 1140,351 1147,360 1154,352 1162,377 1168,350 1175,353 1181,355 1188,347" stroke="#000000" stroke-width="1" fill="none" shape-rendering="crispEdges"/><polyline points="337,223 478,191 567,269 634,286 682,331 720,317 754,308 788,332 814,335 837,330 858,344 878,322 896,333 915,319 932,329 947,358 962,347 975,335 988,346 1001,334 1013,347 1024,350 1035,340 1046,346 1056,351 1065,341 1074,345 1083,357 1091,357 1100,336 1109,342 1118,346 1126,347 1134,336 1140,345 1147,357 1154,349 1162,348 1168,343 1175,360 1181,367 1188,348" stroke="#ffc0cb" stroke-width="1" fill="none" shape-rendering="crispEdges"/><polyline points="337,225 478,191 567,272 634,280 682,311 720,302 754,299 788,314 814,321 837,336 858,322 878,339 896,342 915,320 932,334 947,340 962,331 975,349 988,332 1001,345 1013,352 1024,344 1035,353 1046,350 1056,360 1065,352 1074,344 1083,351 1091,336 1100,354 1109,346 1118,357 1126,341 1134,338 1140,351 1147,356 1154,355 1162,353 1168,336 1175,347 1181,357 1188,340" stroke="#ff0000" stroke-width="1" fill="none" shape-rendering="crispEdges"/><polyline points="337,222 478,189 567,265 634,283 682,313 720,316 754,306 788,329 814,322 837,333 858,318 878,318 896,342 915,329 932,333 947,325 962,348 975,328 988,324 1001,332 1013,350 1024,348 1035,335 1046,343 1056,331 1065,348 1074,356 1083,345 1091,342 1100,360 1109,342 1118,343 1126,354 1134,339 1140,343 1147,350 1154,351 1162,361 1168,354 1175,346 1181,357 1188,351" stroke="#0000ff" stroke-width="1" fill="none" shape-rendering="crispEdges"/><polyline points="337,222 478,191 567,270 634,286 682,315 720,326 754,308 788,324 814,323 837,320 858,336 878,342 896,321 915,326 932,338 947,319 962,335 975,356 988,350 1001,321 1013,338 1024,345 1035,345 1046,337 1056,351 1065,341 1074,340 1083,350 1091,349 1100,351 1109,344 1118,362 1126,362 1134,348 1140,360 1147,350 1154,342 1162,351 1168,344 1175,348 1181,346 1188,361" stroke="#006400" stroke-width="1" fill="none" shape-rendering="crispEdges"/><polyline points="337,223 478,191 567,272 634,287 682,326 720,329 754,297 788,318 814,329 837,334 858,340 878,334 896,331 915,342 932,331 947,338 962,358 975,344 988,357 1001,355 1013,330 1024,356 1035,357 1046,361 1056,343 1065,363 1074,351 1083,347 1091,345 1100,352 1109,359 1118,363 1126,338 1134,355 1140,354 1147,357 1154,360 1162,354 1168,356 1175,349 1181,347 1188,354" stroke="#ff00ff" stroke-width="1" fill="none" shape-rendering="crispEdges"/><polyline points="337,225 478,192 567,274 634,290 682,327 720,312 754,310 788,341 814,334 837,336 858,341 878,337 896,342 915,332 932,344 947,353 962,347 975,355 988,340 1001,346 1013,353 1024,353 1035,349 1046,352 1056,349 1065,345 1074,354 1083,358 1091,368 1100,365 1109,353 1118,358 1126,340 1134,376 1140,352 1147,358 1154,388 1162,359 1168,368 1175,361 1181,357 1188,364" stroke="#00ffff" stroke-width="1" fill="none" shape-rendering="crispEdges"/><polyline points="337,229 478,195 567,277 634,295 682,328 720,313 754,316 788,325 814,338 837,338 858,349 878,337 896,335 915,350 932,341 947,360 962,349 975,358 988,360 1001,351 1013,360 1024,358 1035,357 1046,362 1056,353 1065,358 1074,355 1083,365 1091,359 1100,353 1109,361 1118,365 1126,353 1134,352 1140,354 1147,362 1154,363 1162,368 1168,365 1175,360 1181,358 1188,345" stroke="#00ff00" stroke-width="1" fill="none" shape-rendering="crispEdges"/><polyline points="337,222 478,190 567,270 634,290 682,326 720,307 754,310 788,309 814,322 837,324 858,337 878,329 896,332 915,339 932,341 947,332 962,328 975,337 988,337 1001,356 1013,345 1024,342 1035,357 1046,362 1056,344 1065,346 1074,352 1083,345 1091,353 1100,363 1109,360 1118,358 1126,345 1134,342 1140,349 1147,350 1154,353 1162,356 1168,345 1175,349 1181,340 1188,353" stroke="#ffff00" stroke-width="1" fill="none" shape-rendering="crispEdges"/><polyline points="337,221 478,190 567,265 634,281 682,295 720,310 754,305 788,317 814,316 837,326 858,339 878,352 896,338 915,346 932,318 947,332 962,340 975,338 988,340 1001,333 1013,354 1024,344 1035,358 1046,353 1056,349 1065,342 1074,350 1083,358 1091,352 1100,346 1109,340 1118,359 1126,353 1134,348 1140,353 1147,344 1154,357 1162,358 1168,349 1175,355 1181,345 1188,353" stroke="#800000" stroke-width="1" fill="none" shape-rendering="crispEdges"/><polyline points="337,221 478,187 567,267 634,282 682,336 720,310 754,317 788,318 814,322 837,340 858,327 878,325 896,327 915,330 932,341 947,335 962,343 975,340 988,343 1001,340 1013,352 1024,344 1035,340 1046,352 1056,372 1065,341 1074,352 1083,345 1091,345 1100,348 1109,351 1118,354 1126,360 1134,351 1140,358 1147,346 1154,352 1162,352 1168,358 1175,354 1181,362 1188,345" stroke="#808080" stroke-width="1" fill="none" shape-rendering="crispEdges"/><polyline points="337,220 478,187 567,264 634,271 682,311 720,301 754,305 788,320 814,337 837,335 858,330 878,316 896,330 915,341 932,345 947,327 962,332 975,347 988,336 1001,347 1013,343 1024,345 1035,349 1046,355 1056,354 1065,341 1074,354 1083,359 1091,349 1100,342 1109,352 1118,360 1126,346 1134,354 1140,344 1147,356 1154,345 1162,350 1168,351 1175,346 1181,355 1188,343" stroke="#000000" stroke-width="1" fill="none" shape-rendering="crispEdges"/><polyline points="337,219 478,187 567,263 634,275 682,319 720,309 754,299 788,305 814,326 837,312 858,323 878,324 896,343 915,324 932,324 947,340 962,336 975,323 988,348 1001,340 1013,327 1024,349 1035,346 1046,338 1056,361 1065,353 1074,346 1083,342 1091,340 1100,343 1109,338 1118,342 1126,379 1134,346 1140,349 1147,351 1154,355 1162,347 1168,351 1175,360 1181,359 1188,352" stroke="#ffc0cb" stroke-width="1" fill="none" shape-rendering="crispEdges"/><polyline points="337,223 478,191 567,269 634,289 682,309 720,311 754,303 788,332 814,313 837,314 858,334 878,339 896,334 915,314 932,317 947,329 962,335 975,339 988,336 1001,342 1013,341 1024,328 1035,350 1046,344 1056,355 1065,338 1074,350 1083,350 1091,360 1100,356 1109,349 1118,360 1126,338 1134,350 1140,359 1147,358 1154,355 1162,347 1168,355 1175,351 1181,341 1188,341" stroke="#ffa500" stroke-width="1" fill="none" shape-rendering="crispEdges"/><polyline points="337,221 478,190 567,267 634,284 682,312 720,325 754,311 788,323 814,316 837,307 858,315 878,317 896,330 915,329 932,324 947,340 962,341 975,336 988,343 1001,343 1013,337 1024,354 1035,339 1046,351 1056,350 1065,343 1074,348 1083,335 1091,345 1100,346 1109,352 1118,363 1126,352 1134,354 1140,350 1147,346 1154,349 1162,363 1168,353 1175,354 1181,348 1188,349" stroke="#ff0000" stroke-width="1" fill="none" shape-rendering="crispEdges"/><polyline points="337,223 478,190 567,270 634,285 682,315 720,308 754,301 788,327 814,318 837,318 858,324 878,321 896,336 915,347 932,335 947,362 962,336 975,354 988,357 1001,336 1013,352 1024,356 1035,357 1046,357 1056,340 1065,351 1074,344 1083,356 1091,355 1100,361 1109,353 1118,344 1126,355 1134,345 1140,353 1147,364 1154,346 1162,346 1168,356 1175,363 1181,352 1188,367" stroke="#0000ff" stroke-width="1" fill="none" shape-rendering="crispEdges"/><polyline points="337,218 478,187 567,263 634,276 682,289 720,325 754,309 788,337 814,325 837,320 858,315 878,335 896,333 915,310 932,321 947,317 962,327 975,335 988,349 1001,346 1013,332 1024,339 1035,335 1046,353 1056,341 1065,345 1074,332 1083,338 1091,337 1100,345 1109,329 1118,347 1126,344 1134,363 1140,340 1147,347 1154,351 1162,343 1168,348 1175,349 1181,341 1188,352" stroke="#006400" stroke-width="1" fill="none" shape-rendering="crispEdges"/><polyline points="337,222 478,190 567,269 634,283 682,330 720,313 754,315 788,326 814,310 837,340 858,335 878,342 896,333 915,343 932,332 947,336 962,342 975,343 988,335 1001,363 1013,356 1024,351 1035,359 1046,357 1056,346 1065,351 1074,357 1083,356 1091,367 1100,345 1109,354 1118,359 1126,362 1134,356 1140,358 1147,349 1154,346 1162,358 1168,352 1175,356 1181,354 1188,360" stroke="#ff00ff" stroke-width="1" fill="none" shape-rendering="crispEdges"/><polyline points="337,220 478,189 567,263 634,279 682,330 720,320 754,311 788,316 814,340 837,339 858,314 878,312 896,322 915,320 932,339 947,348 962,349 975,328 988,340 1001,338 1013,353 1024,340 1035,341 1046,343 1056,353 1065,343 1074,343 1083,344 1091,354 1100,351 1109,361 1118,357 1126,341 1134,345 1140,364 1147,351 1154,348 1162,362 1168,347 1175,363 1181,353 1188,337" stroke="#00ffff" stroke-width="1" fill="none" shape-rendering="crispEdges"/><polyline points="337,228 478,195 567,278 634,294 682,318 720,305 754,303 788,317 814,325 837,329 858,344 878,329 896,337 915,339 932,351 947,335 962,345 975,335 988,347 1001,343 1013,344 1024,348 1035,332 1046,338 1056,361 1065,355 1074,348 1083,348 1091,343 1100,344 1109,348 1118,354 1126,353 1134,355 1140,339 1147,343 1154,346 1162,363 1168,354 1175,352 1181,350 1188,344" stroke="#00ff00" stroke-width="1" fill="none" shape-rendering="crispEdges"/><polyline points="337,218 478,187 567,262 634,271 682,375 720,306 754,300 788,299 814,303 837,325 858,332 878,318 896,327 915,324 932,327 947,335 962,332 975,321 988,325 1001,333 1013,324 1024,331 1035,342 1046,339 1056,342 1065,335 1074,336 1083,341 1091,340 1100,329 1109,343 1118,326 1126,366 1134,336 1140,347 1147,334 1154,329 1162,338 1168,339 1175,348 1181,344 1188,342" stroke="#ffff00" stroke-width="1" fill="none" shape-rendering="crispEdges"/><polyline points="337,221 478,189 567,266 634,278 682,301 720,286 754,304 788,300 814,324 837,314 858,315 878,307 896,328 915,327 932,323 947,327 962,328 975,332 988,339 1001,331 1013,328 1024,349 1035,323 1046,321 1056,322 1065,344 1074,343 1083,344 1091,344 1100,337 1109,341 1118,349 1126,332 1134,340 1140,345 1147,349 1154,346 1162,340 1168,345 1175,350 1181,346 1188,324" stroke="#800000" stroke-width="1" fill="none" shape-rendering="crispEdges"/><polyline points="337,218 478,186 567,264 634,276 682,309 720,316 754,321 788,320 814,327 837,336 858,331 878,335 896,344 915,324 932,324 947,336 962,326 975,361 988,350 1001,356 1013,345 1024,346 1035,341 1046,358 1056,352 1065,339 1074,341 1083,347 1091,346 1100,344 1109,349 1118,361 1126,357 1134,362 1140,344 1147,357 1154,356 1162,369 1168,367 1175,358 1181,353 1188,360" stroke="#808080" stroke-width="1" fill="none" shape-rendering="crispEdges"/><polyline points="337,219 478,185 567,266 634,277 682,306 720,296 754,308 788,326 814,321 837,321 858,331 878,326 896,336 915,339 932,339 947,335 962,341 975,316 988,347 1001,333 1013,334 1024,345 1035,340 1046,340 1056,342 1065,335 1074,345 1083,338 1091,343 1100,349 1109,346 1118,341 1126,341 1134,343 1140,364 1147,353 1154,352 1162,348 1168,357 1175,343 1181,341 1188,357" stroke="#000000" stroke-width="1" fill="none" shape-rendering="crispEdges"/><polyline points="337,218 478,188 567,260 634,274 682,305 720,314 754,306 788,313 814,311 837,336 858,345 878,323 896,325 915,332 932,324 947,345 962,338 975,334 988,348 1001,336 1013,361 1024,351 1035,354 1046,343 1056,346 1065,342 1074,346 1083,344 1091,360 1100,353 1109,341 1118,345 1126,351 1134,343 1140,360 1147,362 1154,347 1162,352 1168,354 1175,355 1181,337 1188,346" stroke="#ffc0cb" stroke-width="1" fill="none" shape-rendering="crispEdges"/><polyline points="337,225 478,195 567,272 634,291 682,355 720,316 754,339 788,317 814,324 837,368 858,350 878,324 896,351 915,351 932,348 947,346 962,329 975,350 988,349 1001,356 1013,346 1024,362 1035,349 1046,342 1056,335 1065,361 1074,353 1083,356 1091,352 1100,358 1109,356 1118,362 1126,359 1134,357 1140,356 1147,358 1154,358 1162,353 1168,359 1175,360 1181,361 1188,349" stroke="#ffa500" stroke-width="1" fill="none" shape-rendering="crispEdges"/><polyline points="337,224 478,192 567,270 634,287 682,334 720,320 754,308 788,331 814,340 837,326 858,340 878,328 896,335 915,329 932,349 947,349 962,332 975,347 988,328 1001,351 1013,344 1024,341 1035,341 1046,355 1056,344 1065,354 1074,356 1083,349 1091,340 1100,357 1109,350 1118,347 1126,362 1134,352 1140,348 1147,346 1154,351 1162,352 1168,351 1175,363 1181,363 1188,354" stroke="#ff0000" stroke-width="1" fill="none" shape-rendering="crispEdges"/><polyline points="337,222 478,191 567,271 634,283 682,305 720,309 754,301 788,304 814,318 837,310 858,332 878,328 896,331 915,327 932,311 947,335 962,316 975,337 988,333 1001,331 1013,326 1024,333 1035,336 1046,340 1056,333 1065,338 1074,337 1083,345 1091,362 1100,351 1109,341 1118,362 1126,349 1134,342 1140,340 1147,346 1154,343 1162,338 1168,346 1175,360 1181,351 1188,342" stroke="#0000ff" stroke-width="1" fill="none" shape-rendering="crispEdges"/><polyline points="337,217 478,186 567,262 634,275 682,314 720,315 754,312 788,312 814,334 837,309 858,323 878,352 896,332 915,327 932,340 947,326 962,324 975,345 988,354 1001,354 1013,340 1024,343 1035,347 1046,354 1056,348 1065,346 1074,359 1083,364 1091,351 1100,349 1109,338 1118,343 1126,342 1134,365 1140,360 1147,361 1154,340 1162,356 1168,347 1175,348 1181,349 1188,342" stroke="#006400" stroke-width="1" fill="none" shape-rendering="crispEdges"/><polyline points="337,224 478,192 567,275 634,289 682,310 720,324 754,296 788,322 814,316 837,336 858,332 878,329 896,345 915,331 932,331 947,323 962,342 975,321 988,326 1001,339 1013,353 1024,348 1035,350 1046,332 1056,362 1065,353 1074,338 1083,349 1091,347 1100,336 1109,356 1118,353 1126,341 1134,343 1140,343 1147,353 1154,343 1162,343 1168,352 1175,344 1181,347 1188,353" stroke="#ff00ff" stroke-width="1" fill="none" shape-rendering="crispEdges"/><polyline points="337,221 478,188 567,269 634,284 682,320 720,313 754,314 788,321 814,325 837,339 858,340 878,336 896,342 915,345 932,338 947,363 962,344 975,355 988,339 1001,344 1013,350 1024,338 1035,357 1046,349 1056,354 1065,344 1074,350 1083,359 1091,348 1100,360 1109,359 1118,372 1126,348 1134,369 1140,364 1147,366 1154,356 1162,356 1168,350 1175,357 1181,348 1188,360" stroke="#00ffff" stroke-width="1" fill="none" shape-rendering="crispEdges"/><polyline points="337,223 478,190 567,270 634,283 682,325 720,325 754,317 788,327 814,340 837,334 858,348 878,351 896,352 915,347 932,346 947,338 962,343 975,347 988,360 1001,359 1013,362 1024,358 1035,350 1046,350 1056,347 1065,365 1074,364 1083,358 1091,367 1100,360 1109,366 1118,349 1126,348 1134,348 1140,347 1147,368 1154,366 1162,360 1168,365 1175,359 1181,363 1188,351" stroke="#00ff00" stroke-width="1" fill="none" shape-rendering="crispEdges"/><polyline points="337,224 478,193 567,273 634,291 682,303 720,309 754,311 788,314 814,310 837,319 858,335 878,324 896,334 915,330 932,333 947,337 962,330 975,339 988,343 1001,348 1013,356 1024,336 1035,345 1046,346 1056,352 1065,364 1074,346 1083,333 1091,355 1100,352 1109,349 1118,355 1126,352 1134,346 1140,345 1147,342 1154,352 1162,352 1168,355 1175,341 1181,350 1188,350" stroke="#ffff00" stroke-width="1" fill="none" shape-rendering="crispEdges"/><polyline points="337,217 478,187 567,259 634,270 682,302 720,314 754,316 788,304 814,329 837,316 858,339 878,334 896,352 915,337 932,349 947,335 962,331 975,328 988,333 1001,352 1013,341 1024,340 1035,337 1046,335 1056,349 1065,349 1074,358 1083,333 1091,346 1100,345 1109,352 1118,350 1126,343 1134,354 1140,348 1147,348 1154,352 1162,358 1168,349 1175,346 1181,341 1188,339" stroke="#800000" stroke-width="1" fill="none" shape-rendering="crispEdges"/><polyline points="337,217 478,186 567,262 634,275 682,339 720,307 754,308 788,310 814,344 837,326 858,329 878,338 896,325 915,327 932,334 947,362 962,349 975,336 988,353 1001,343 1013,346 1024,347 1035,350 1046,353 1056,357 1065,358 1074,369 1083,360 1091,347 1100,347 1109,349 1118,351 1126,344 1134,360 1140,348 1147,363 1154,347 1162,348 1168,356 1175,348 1181,343 1188,347" stroke="#808080" stroke-width="1" fill="none" shape-rendering="crispEdges"/><polyline points="337,218 478,186 567,263 634,277 682,322 720,325 754,320 788,337 814,331 837,323 858,336 878,324 896,325 915,335 932,359 947,337 962,356 975,354 988,360 1001,347 1013,343 1024,352 1035,349 1046,349 1056,360 1065,341 1074,351 1083,354 1091,348 1100,357 1109,344 1118,362 1126,354 1134,351 1140,347 1147,355 1154,346 1162,363 1168,366 1175,358 1181,344 1188,337" stroke="#000000" stroke-width="1" fill="none" shape-rendering="crispEdges"/><polyline points="337,219 478,186 567,264 634,276 682,305 720,296 754,310 788,307 814,327 837,310 858,333 878,311 896,315 915,349 932,332 947,322 962,333 975,342 988,321 1001,333 1013,334 1024,333 1035,337 1046,349 1056,360 1065,345 1074,342 1083,347 1091,347 1100,336 1109,349 1118,343 1126,363 1134,338 1140,347 1147,338 1154,347 1162,345 1168,337 1175,348 1181,375 1188,351" stroke="#ffc0cb" stroke-width="1" fill="none" shape-rendering="crispEdges"/><polyline points="337,218 478,185 567,261 634,275 682,339 720,306 754,322 788,323 814,334 837,330 858,325 878,334 896,352 915,331 932,330 947,341 962,337 975,356 988,328 1001,349 1013,354 1024,337 1035,357 1046,354 1056,360 1065,343 1074,347 1083,351 1091,345 1100,363 1109,359 1118,369 1126,342 1134,348 1140,352 1147,349 1154,354 1162,356 1168,350 1175,351 1181,355 1188,354" stroke="#ffa500" stroke-width="1" fill="none" shape-rendering="crispEdges"/><polyline points="337,219 478,187 567,264 634,278 682,308 720,295 754,287 788,314 814,333 837,330 858,318 878,335 896,315 915,329 932,336 947,328 962,328 975,316 988,338 1001,352 1013,344 1024,343 1035,339 1046,336 1056,345 1065,348 1074,349 1083,351 1091,351 1100,340 1109,333 1118,341 1126,343 1134,353 1140,347 1147,349 1154,347 1162,339 1168,339 1175,346 1181,342 1188,354" stroke="#ff0000" stroke-width="1" fill="none" shape-rendering="crispEdges"/><polyline points="337,217 478,187 567,260 634,276 682,314 720,322 754,300 788,329 814,333 837,330 858,333 878,329 896,313 915,332 932,349 947,343 962,328 975,337 988,339 1001,335 1013,340 1024,348 1035,344 1046,349 1056,351 1065,338 1074,348 1083,348 1091,349 1100,348 1109,347 1118,360 1126,344 1134,342 1140,348 1147,348 1154,345 1162,355 1168,343 1175,354 1181,358 1188,363" stroke="#0000ff" stroke-width="1" fill="none" shape-rendering="crispEdges"/><polyline points="337,219 478,189 567,264 634,280 682,304 720,296 754,313 788,329 814,330 837,324 858,322 878,340 896,315 915,331 932,322 947,350 962,331 975,346 988,349 1001,339 1013,342 1024,336 1035,343 1046,344 1056,334 1065,342 1074,356 1083,355 1091,355 1100,356 1109,354 1118,347 1126,350 1134,352 1140,351 1147,338 1154,349 1162,351 1168,337 1175,354 1181,341 1188,360" stroke="#006400" stroke-width="1" fill="none" shape-rendering="crispEdges"/><polyline points="337,219 478,186 567,260 634,274 682,321 720,308 754,310 788,309 814,320 837,294 858,324 878,319 896,340 915,335 932,340 947,320 962,344 975,360 988,339 1001,336 1013,348 1024,346 1035,338 1046,332 1056,344 1065,341 1074,350 1083,342 1091,345 1100,353 1109,338 1118,356 1126,346 1134,354 1140,358 1147,358 1154,343 1162,350 1168,339 1175,330 1181,356 1188,352" stroke="#ff00ff" stroke-width="1" fill="none" shape-rendering="crispEdges"/><polyline points="337,221 478,190 567,268 634,278 682,329 720,307 754,299 788,303 814,319 837,321 858,344 878,334 896,335 915,339 932,336 947,336 962,360 975,332 988,335 1001,344 1013,345 1024,340 1035,328 1046,343 1056,328 1065,362 1074,348 1083,343 1091,349 1100,350 1109,349 1118,341 1126,345 1134,353 1140,341 1147,365 1154,346 1162,348 1168,347 1175,345 1181,349 1188,353" stroke="#00ffff" stroke-width="1" fill="none" shape-rendering="crispEdges"/><polyline points="337,223 478,190 567,270 634,284 682,325 720,331 754,331 788,325 814,316 837,333 858,340 878,331 896,330 915,349 932,346 947,327 962,348 975,338 988,353 1001,349 1013,348 1024,347 1035,343 1046,338 1056,347 1065,358 1074,348 1083,357 1091,354 1100,350 1109,359 1118,356 1126,364 1134,353 1140,348 1147,341 1154,352 1162,359 1168,345 1175,363 1181,350 1188,363" stroke="#00ff00" stroke-width="1" fill="none" shape-rendering="crispEdges"/><polyline points="337,215 478,187 567,261 634,276 682,328 720,330 754,305 788,312 814,340 837,320 858,325 878,339 896,330 915,333 932,318 947,347 962,322 975,332 988,342 1001,332 1013,329 1024,348 1035,341 1046,345 1056,347 1065,347 1074,356 1083,358 1091,360 1100,347 1109,353 1118,350 1126,355 1134,350 1140,358 1147,348 1154,350 1162,351 1168,353 1175,339 1181,349 1188,346" stroke="#ffff00" stroke-width="1" fill="none" shape-rendering="crispEdges"/><polyline points="337,223 478,190 567,270 634,283 682,322 720,311 754,318 788,318 814,322 837,327 858,334 878,329 896,343 915,341 932,335 947,344 962,348 975,344 988,331 1001,344 1013,354 1024,370 1035,345 1046,361 1056,361 1065,371 1074,366 1083,349 1091,349 1100,358 1109,359 1118,351 1126,353 1134,356 1140,345 1147,349 1154,363 1162,355 1168,355 1175,352 1181,351 1188,355" stroke="#800000" stroke-width="1" fill="none" shape-rendering="crispEdges"/><polyline points="337,221 478,189 567,265 634,279 682,295 720,317 754,299 788,307 814,321 837,331 858,318 878,313 896,323 915,327 932,345 947,327 962,332 975,342 988,338 1001,347 1013,340 1024,352 1035,347 1046,340 1056,334 1065,348 1074,341 1083,336 1091,348 1100,343 1109,362 1118,340 1126,349 1134,349 1140,351 1147,345 1154,336 1162,353 1168,359 1175,358 1181,360 1188,356" stroke="#808080" stroke-width="1" fill="none" shape-rendering="crispEdges"/><polyline points="337,224 478,193 567,277 634,295 682,314 720,345 754,296 788,328 814,319 837,329 858,328 878,331 896,322 915,323 932,333 947,337 962,345 975,350 988,345 1001,343 1013,334 1024,344 1035,343 1046,353 1056,356 1065,350 1074,346 1083,338 1091,350 1100,351 1109,346 1118,355 1126,353 1134,356 1140,355 1147,353 1154,344 1162,341 1168,354 1175,345 1181,349 1188,344" stroke="#000000" stroke-width="1" fill="none" shape-rendering="crispEdges"/><polyline points="337,222 478,191 567,269 634,286 682,336 720,312 754,306 788,302 814,341 837,327 858,323 878,340 896,332 915,329 932,333 947,331 962,344 975,343 988,344 1001,336 1013,352 1024,340 1035,342 1046,346 1056,349 1065,354 1074,352 1083,355 1091,346 1100,351 1109,363 1118,356 1126,349 1134,349 1140,355 1147,356 1154,356 1162,351 1168,353 1175,357 1181,351 1188,335" stroke="#ffc0cb" stroke-width="1" fill="none" shape-rendering="crispEdges"/><polyline points="337,218 478,187 567,259 634,275 682,299 720,287 754,290 788,302 814,320 837,298 858,320 878,319 896,311 915,325 932,319 947,344 962,330 975,335 988,328 1001,329 1013,329 1024,332 1035,339 1046,322 1056,319 1065,346 1074,342 1083,346 1091,341 1100,334 1109,341 1118,355 1126,341 1134,330 1140,344 1147,359 1154,341 1162,330 1168,351 1175,351 1181,344 1188,345" stroke="#ffa500" stroke-width="1" fill="none" shape-rendering="crispEdges"/><polyline points="337,217 478,185 567,260 634,276 682,297 720,307 754,314 788,304 814,307 837,330 858,322 878,314 896,329 915,325 932,334 947,352 962,337 975,336 988,346 1001,342 1013,332 1024,343 1035,346 1046,339 1056,355 1065,347 1074,342 1083,347 1091,347 1100,353 1109,340 1118,342 1126,346 1134,361 1140,339 1147,354 1154,353 1162,348 1168,339 1175,344 1181,354 1188,353" stroke="#ff0000" stroke-width="1" fill="none" shape-rendering="crispEdges"/><polyline points="337,223 478,191 567,269 634,283 682,311 720,327 754,321 788,321 814,321 837,315 858,325 878,338 896,323 915,330 932,322 947,324 962,326 975,339 988,324 1001,334 1013,336 1024,330 1035,347 1046,335 1056,339 1065,353 1074,331 1083,357 1091,343 1100,340 1109,365 1118,350 1126,357 1134,353 1140,331 1147,340 1154,333 1162,351 1168,346 1175,347 1181,353 1188,371" stroke="#0000ff" stroke-width="1" fill="none" shape-rendering="crispEdges"/><polyline points="337,224 478,191 567,271 634,286 682,310 720,318 754,322 788,328 814,332 837,353 858,329 878,335 896,330 915,338 932,351 947,341 962,339 975,340 988,355 1001,352 1013,358 1024,353 1035,358 1046,352 1056,355 1065,359 1074,356 1083,359 1091,348 1100,361 1109,356 1118,350 1126,366 1134,351 1140,346 1147,366 1154,362 1162,363 1168,371 1175,359 1181,356 1188,358" stroke="#006400" stroke-width="1" fill="none" shape-rendering="crispEdges"/><polyline points="337,225 478,194 567,275 634,295 682,323 720,310 754,311 788,332 814,334 837,351 858,324 878,325 896,323 915,338 932,335 947,332 962,345 975,337 988,339 1001,375 1013,358 1024,353 1035,353 1046,354 1056,354 1065,355 1074,344 1083,353 1091,351 1100,359 1109,355 1118,337 1126,354 1134,346 1140,349 1147,351 1154,346 1162,357 1168,360 1175,347 1181,350 1188,350" stroke="#ff00ff" stroke-width="1" fill="none" shape-rendering="crispEdges"/><polyline points="337,217 478,187 567,264 634,271 682,294 720,311 754,313 788,302 814,304 837,316 858,336 878,328 896,322 915,327 932,323 947,335 962,335 975,361 988,335 1001,352 1013,339 1024,331 1035,347 1046,344 1056,331 1065,338 1074,353 1083,339 1091,351 1100,346 1109,340 1118,337 1126,343 1134,351 1140,342 1147,340 1154,350 1162,338 1168,355 1175,339 1181,347 1188,353" stroke="#00ffff" stroke-width="1" fill="none" shape-rendering="crispEdges"/><polyline points="337,223 478,191 567,272 634,289 682,301 720,322 754,306 788,314 814,337 837,323 858,335 878,332 896,328 915,337 932,337 947,328 962,338 975,345 988,379 1001,348 1013,347 1024,359 1035,362 1046,344 1056,344 1065,345 1074,353 1083,346 1091,358 1100,352 1109,364 1118,349 1126,353 1134,353 1140,353 1147,355 1154,341 1162,359 1168,351 1175,357 1181,364 1188,355" stroke="#00ff00" stroke-width="1" fill="none" shape-rendering="crispEdges"/><polyline points="337,223 478,193 567,270 634,291 682,318 720,311 754,292 788,309 814,320 837,342 858,343 878,323 896,337 915,326 932,335 947,352 962,338 975,330 988,343 1001,347 1013,348 1024,326 1035,351 1046,346 1056,347 1065,347 1074,355 1083,342 1091,351 1100,343 1109,352 1118,346 1126,348 1134,345 1140,341 1147,341 1154,347 1162,351 1168,343 1175,352 1181,350 1188,356" stroke="#ffff00" stroke-width="1" fill="none" shape-rendering="crispEdges"/><polyline points="337,225 478,194 567,274 634,293 682,307 720,317 754,313 788,316 814,328 837,350 858,334 878,327 896,333 915,329 932,358 947,342 962,332 975,357 988,363 1001,347 1013,351 1024,365 1035,337 1046,362 1056,364 1065,349 1074,355 1083,363 1091,352 1100,355 1109,353 1118,345 1126,359 1134,371 1140,349 1147,359 1154,362 1162,351 1168,355 1175,353 1181,355 1188,364" stroke="#800000" stroke-width="1" fill="none" shape-rendering="crispEdges"/><polyline points="337,224 478,191 567,272 634,288 682,352 720,335 754,318 788,311 814,340 837,334 858,336 878,329 896,320 915,322 932,349 947,337 962,341 975,346 988,346 1001,343 1013,348 1024,360 1035,339 1046,342 1056,361 1065,348 1074,354 1083,362 1091,357 1100,354 1109,347 1118,354 1126,350 1134,352 1140,359 1147,364 1154,350 1162,349 1168,366 1175,364 1181,351 1188,357" stroke="#808080" stroke-width="1" fill="none" shape-rendering="crispEdges"/><polyline points="337,219 478,187 567,260 634,274 682,311 720,320 754,301 788,325 814,311 837,322 858,336 878,318 896,318 915,334 932,315 947,323 962,336 975,322 988,347 1001,335 1013,336 1024,334 1035,343 1046,328 1056,344 1065,334 1074,346 1083,340 1091,346 1100,352 1109,357 1118,342 1126,354 1134,352 1140,339 1147,352 1154,338 1162,348 1168,352 1175,352 1181,338 1188,357" stroke="#000000" stroke-width="1" fill="none" shape-rendering="crispEdges"/><polyline points="337,221 478,191 567,267 634,282 682,318 720,306 754,300 788,324 814,328 837,310 858,327 878,320 896,333 915,330 932,321 947,323 962,343 975,333 988,333 1001,355 1013,342 1024,345 1035,349 1046,343 1056,351 1065,342 1074,364 1083,342 1091,341 1100,342 1109,351 1118,334 1126,363 1134,345 1140,353 1147,351 1154,346 1162,351 1168,336 1175,349 1181,365 1188,345" stroke="#ffc0cb" stroke-width="1" fill="none" shape-rendering="crispEdges"/><polyline points="337,222 478,190 567,267 634,284 682,327 720,310 754,317 788,318 814,329 837,337 858,349 878,332 896,346 915,331 932,338 947,362 962,332 975,366 988,354 1001,358 1013,346 1024,346 1035,353 1046,351 1056,357 1065,354 1074,360 1083,355 1091,358 1100,355 1109,351 1118,359 1126,364 1134,345 1140,351 1147,361 1154,379 1162,358 1168,361 1175,360 1181,359 1188,352" stroke="#ffa500" stroke-width="1" fill="none" shape-rendering="crispEdges"/><polyline points="337,223 478,189 567,269 634,287 682,325 720,311 754,304 788,308 814,332 837,328 858,325 878,334 896,326 915,322 932,330 947,333 962,337 975,340 988,334 1001,358 1013,335 1024,335 1035,346 1046,346 1056,334 1065,342 1074,338 1083,344 1091,344 1100,349 1109,353 1118,346 1126,349 1134,355 1140,349 1147,350 1154,363 1162,355 1168,341 1175,361 1181,356 1188,350" stroke="#ff0000" stroke-width="1" fill="none" shape-rendering="crispEdges"/><polyline points="337,216 478,186 567,260 634,273 682,297 720,300 754,305 788,319 814,321 837,332 858,332 878,331 896,321 915,330 932,333 947,345 962,338 975,348 988,329 1001,332 1013,350 1024,343 1035,347 1046,357 1056,340 1065,345 1074,339 1083,346 1091,343 1100,353 1109,351 1118,344 1126,345 1134,345 1140,358 1147,353 1154,341 1162,350 1168,361 1175,348 1181,351 1188,340" stroke="#0000ff" stroke-width="1" fill="none" shape-rendering="crispEdges"/><polyline points="337,220 478,187 567,264 634,278 682,307 720,310 754,302 788,307 814,311 837,344 858,337 878,321 896,336 915,333 932,339 947,333 962,337 975,334 988,338 1001,348 1013,342 1024,356 1035,343 1046,344 1056,363 1065,342 1074,354 1083,348 1091,343 1100,335 1109,351 1118,356 1126,350 1134,360 1140,349 1147,355 1154,344 1162,338 1168,343 1175,343 1181,347 1188,351" stroke="#006400" stroke-width="1" fill="none" shape-rendering="crispEdges"/><polyline points="337,223 478,192 567,270 634,287 682,302 720,322 754,302 788,298 814,325 837,314 858,330 878,319 896,324 915,335 932,319 947,338 962,328 975,343 988,341 1001,349 1013,330 1024,348 1035,353 1046,351 1056,352 1065,359 1074,360 1083,352 1091,344 1100,339 1109,353 1118,349 1126,355 1134,363 1140,349 1147,345 1154,342 1162,349 1168,340 1175,352 1181,351 1188,341" stroke="#ff00ff" stroke-width="1" fill="none" shape-rendering="crispEdges"/><polyline points="337,224 478,191 567,270 634,290 682,324 720,339 754,310 788,310 814,334 837,339 858,326 878,342 896,324 915,321 932,335 947,334 962,337 975,334 988,350 1001,330 1013,347 1024,352 1035,343 1046,352 1056,360 1065,355 1074,352 1083,356 1091,358 1100,333 1109,347 1118,349 1126,345 1134,352 1140,347 1147,349 1154,351 1162,353 1168,357 1175,367 1181,339 1188,361" stroke="#00ffff" stroke-width="1" fill="none" shape-rendering="crispEdges"/><polyline points="337,218 478,188 567,267 634,279 682,321 720,319 754,331 788,301 814,320 837,324 858,313 878,325 896,323 915,324 932,333 947,328 962,328 975,350 988,335 1001,340 1013,342 1024,343 1035,341 1046,338 1056,344 1065,332 1074,348 1083,344 1091,341 1100,361 1109,354 1118,351 1126,352 1134,349 1140,341 1147,354 1154,353 1162,347 1168,353 1175,355 1181,337 1188,343" stroke="#00ff00" stroke-width="1" fill="none" shape-rendering="crispEdges"/><polyline points="337,221 478,190 567,268 634,283 682,292 720,316 754,301 788,312 814,332 837,321 858,320 878,346 896,323 915,326 932,348 947,336 962,326 975,339 988,343 1001,329 1013,336 1024,337 1035,351 1046,325 1056,351 1065,337 1074,342 1083,341 1091,338 1100,348 1109,344 1118,341 1126,355 1134,375 1140,330 1147,339 1154,348 1162,342 1168,348 1175,346 1181,355 1188,352" stroke="#ffff00" stroke-width="1" fill="none" shape-rendering="crispEdges"/><polyline points="337,220 478,187 567,266 634,279 682,319 720,307 754,297 788,310 814,298 837,315 858,322 878,342 896,329 915,323 932,325 947,334 962,323 975,342 988,339 1001,327 1013,340 1024,341 1035,336 1046,340 1056,331 1065,343 1074,343 1083,340 1091,353 1100,350 1109,357 1118,333 1126,348 1134,345 1140,342 1147,342 1154,341 1162,350 1168,369 1175,345 1181,333 1188,348" stroke="#800000" stroke-width="1" fill="none" shape-rendering="crispEdges"/><polyline points="337,225 478,193 567,275 634,294 682,327 720,331 754,304 788,327 814,337 837,355 858,333 878,338 896,344 915,337 932,347 947,329 962,356 975,348 988,342 1001,351 1013,358 1024,358 1035,360 1046,362 1056,358 1065,362 1074,351 1083,356 1091,365 1100,361 1109,354 1118,361 1126,360 1134,363 1140,365 1147,352 1154,353 1162,366 1168,356 1175,362 1181,363 1188,361" stroke="#808080" stroke-width="1" fill="none" shape-rendering="crispEdges"/><polyline points="337,219 478,187 567,264 634,278 682,305 720,301 754,322 788,316 814,312 837,307 858,322 878,318 896,327 915,339 932,339 947,328 962,333 975,346 988,337 1001,336 1013,346 1024,341 1035,347 1046,346 1056,354 1065,341 1074,333 1083,346 1091,338 1100,358 1109,330 1118,350 1126,355 1134,354 1140,355 1147,346 1154,369 1162,354 1168,357 1175,358 1181,342 1188,358" stroke="#000000" stroke-width="1" fill="none" shape-rendering="crispEdges"/><polyline points="337,221 478,189 567,270 634,287 682,327 720,342 754,298 788,320 814,314 837,326 858,343 878,351 896,325 915,337 932,331 947,332 962,328 975,329 988,354 1001,343 1013,341 1024,344 1035,342 1046,337 1056,337 1065,338 1074,351 1083,344 1091,335 1100,350 1109,342 1118,351 1126,352 1134,348 1140,348 1147,359 1154,356 1162,347 1168,347 1175,347 1181,349 1188,338" stroke="#ffc0cb" stroke-width="1" fill="none" shape-rendering="crispEdges"/><polyline points="337,222 478,189 567,270 634,287 682,319 720,294 754,305 788,293 814,318 837,330 858,336 878,331 896,326 915,354 932,330 947,329 962,335 975,331 988,339 1001,335 1013,342 1024,340 1035,345 1046,338 1056,337 1065,340 1074,350 1083,348 1091,349 1100,354 1109,341 1118,353 1126,347 1134,340 1140,349 1147,356 1154,353 1162,349 1168,344 1175,350 1181,351 1188,360" stroke="#ffa500" stroke-width="1" fill="none" shape-rendering="crispEdges"/><polyline points="337,218 478,187 567,261 634,273 682,316 720,314 754,316 788,320 814,313 837,343 858,333 878,319 896,326 915,343 932,335 947,353 962,354 975,337 988,355 1001,350 1013,336 1024,334 1035,355 1046,335 1056,361 1065,343 1074,340 1083,335 1091,348 1100,344 1109,347 1118,340 1126,353 1134,347 1140,352 1147,346 1154,355 1162,350 1168,351 1175,348 1181,356 1188,339" stroke="#ff0000" stroke-width="1" fill="none" shape-rendering="crispEdges"/><polyline points="337,222 478,190 567,270 634,280 682,325 720,327 754,307 788,308 814,328 837,333 858,350 878,331 896,330 915,340 932,340 947,351 962,341 975,344 988,351 1001,343 1013,368 1024,354 1035,348 1046,356 1056,365 1065,368 1074,361 1083,343 1091,369 1100,357 1109,355 1118,353 1126,358 1134,361 1140,361 1147,364 1154,355 1162,354 1168,351 1175,355 1181,367 1188,360" stroke="#0000ff" stroke-width="1" fill="none" shape-rendering="crispEdges"/><polyline points="337,220 478,187 567,265 634,275 682,308 720,296 754,302 788,330 814,314 837,323 858,320 878,334 896,336 915,333 932,350 947,332 962,328 975,347 988,325 1001,348 1013,327 1024,357 1035,338 1046,341 1056,336 1065,353 1074,362 1083,355 1091,358 1100,336 1109,339 1118,355 1126,343 1134,342 1140,349 1147,346 1154,353 1162,347 1168,340 1175,353 1181,355 1188,353" stroke="#006400" stroke-width="1" fill="none" shape-rendering="crispEdges"/><polyline points="337,218 478,187 567,265 634,277 682,302 720,313 754,301 788,314 814,322 837,326 858,304 878,318 896,328 915,324 932,330 947,324 962,325 975,333 988,332 1001,332 1013,335 1024,330 1035,341 1046,338 1056,336 1065,325 1074,345 1083,345 1091,336 1100,339 1109,337 1118,346 1126,345 1134,340 1140,358 1147,329 1154,336 1162,335 1168,344 1175,345 1181,339 1188,347" stroke="#ff00ff" stroke-width="1" fill="none" shape-rendering="crispEdges"/><polyline points="337,219 478,187 567,261 634,272 682,302 720,298 754,293 788,311 814,311 837,325 858,328 878,307 896,311 915,363 932,319 947,326 962,323 975,339 988,331 1001,332 1013,332 1024,343 1035,340 1046,339 1056,356 1065,348 1074,329 1083,345 1091,330 1100,333 1109,331 1118,339 1126,355 1134,329 1140,331 1147,330 1154,342 1162,335 1168,346 1175,351 1181,345 1188,337" stroke="#00ffff" stroke-width="1" fill="none" shape-rendering="crispEdges"/><polyline points="337,227 478,193 567,278 634,293 682,301 720,308 754,313 788,326 814,338 837,317 858,324 878,330 896,335 915,315 932,335 947,340 962,334 975,347 988,350 1001,372 1013,340 1024,346 1035,340 1046,353 1056,337 1065,345 1074,358 1083,350 1091,354 1100,358 1109,346 1118,349 1126,344 1134,346 1140,351 1147,345 1154,355 1162,359 1168,346 1175,353 1181,352 1188,354" stroke="#00ff00" stroke-width="1" fill="none" shape-rendering="crispEdges"/><polyline points="337,225 478,192 567,273 634,293 682,304 720,307 754,323 788,346 814,328 837,331 858,356 878,338 896,346 915,348 932,334 947,343 962,357 975,353 988,364 1001,347 1013,347 1024,349 1035,352 1046,351 1056,358 1065,358 1074,360 1083,357 1091,356 1100,346 1109,359 1118,352 1126,369 1134,355 1140,342 1147,355 1154,351 1162,341 1168,347 1175,359 1181,361 1188,357" stroke="#ffff00" stroke-width="1" fill="none" shape-rendering="crispEdges"/><polyline points="337,222 478,190 567,273 634,284 682,314 720,320 754,305 788,327 814,337 837,339 858,330 878,327 896,330 915,343 932,338 947,336 962,342 975,338 988,351 1001,337 1013,340 1024,353 1035,341 1046,335 1056,355 1065,356 1074,347 1083,364 1091,358 1100,356 1109,358 1118,357 1126,353 1134,357 1140,353 1147,356 1154,360 1162,361 1168,360 1175,349 1181,358 1188,338" stroke="#800000" stroke-width="1" fill="none" shape-rendering="crispEdges"/><polyline points="337,220 478,188 567,267 634,283 682,298 720,321 754,296 788,309 814,319 837,324 858,317 878,317 896,327 915,323 932,332 947,324 962,320 975,323 988,335 1001,333 1013,339 1024,344 1035,353 1046,337 1056,336 1065,339 1074,343 1083,348 1091,331 1100,350 1109,334 1118,341 1126,340 1134,349 1140,342 1147,338 1154,334 1162,342 1168,328 1175,342 1181,333 1188,340" stroke="#808080" stroke-width="1" fill="none" shape-rendering="crispEdges"/><polyline points="337,223 478,190 567,270 634,288 682,328 720,297 754,306 788,338 814,321 837,325 858,339 878,318 896,320 915,341 932,344 947,329 962,320 975,345 988,328 1001,333 1013,341 1024,350 1035,335 1046,346 1056,344 1065,344 1074,347 1083,344 1091,339 1100,336 1109,351 1118,342 1126,347 1134,337 1140,335 1147,349 1154,352 1162,347 1168,348 1175,340 1181,344 1188,352" stroke="#000000" stroke-width="1" fill="none" shape-rendering="crispEdges"/><polyline points="337,223 478,193 567,270 634,289 682,328 720,333 754,296 788,322 814,329 837,354 858,330 878,341 896,352 915,340 932,320 947,344 962,349 975,359 988,340 1001,337 1013,351 1024,348 1035,349 1046,360 1056,345 1065,346 1074,356 1083,351 1091,359 1100,369 1109,364 1118,358 1126,354 1134,359 1140,354 1147,357 1154,347 1162,360 1168,361 1175,357 1181,359 1188,374" stroke="#ffc0cb" stroke-width="1" fill="none" shape-rendering="crispEdges"/><polyline points="337,217 478,185 567,263 634,275 682,323 720,308 754,293 788,313 814,316 837,328 858,312 878,334 896,327 915,327 932,341 947,322 962,328 975,341 988,335 1001,334 1013,335 1024,333 1035,337 1046,330 1056,318 1065,349 1074,338 1083,358 1091,343 1100,349 1109,349 1118,337 1126,344 1134,339 1140,345 1147,349 1154,340 1162,346 1168,340 1175,355 1181,338 1188,345" stroke="#ffa500" stroke-width="1" fill="none" shape-rendering="crispEdges"/><polyline points="337,222 478,191 567,271 634,292 682,322 720,313 754,303 788,301 814,328 837,323 858,310 878,324 896,340 915,337 932,344 947,326 962,330 975,327 988,343 1001,338 1013,326 1024,326 1035,355 1046,340 1056,345 1065,341 1074,356 1083,356 1091,339 1100,349 1109,346 1118,331 1126,370 1134,339 1140,358 1147,342 1154,347 1162,347 1168,350 1175,342 1181,357 1188,345" stroke="#ff0000" stroke-width="1" fill="none" shape-rendering="crispEdges"/><polyline points="337,221 478,188 567,266 634,284 682,330 720,323 754,304 788,318 814,324 837,336 858,333 878,321 896,339 915,346 932,325 947,348 962,342 975,337 988,333 1001,338 1013,350 1024,350 1035,361 1046,343 1056,349 1065,365 1074,346 1083,348 1091,355 1100,357 1109,365 1118,348 1126,348 1134,351 1140,347 1147,354 1154,356 1162,352 1168,357 1175,347 1181,354 1188,345" stroke="#0000ff" stroke-width="1" fill="none" shape-rendering="crispEdges"/><polyline points="337,219 478,185 567,265 634,280 682,321 720,310 754,307 788,317 814,332 837,357 858,340 878,314 896,331 915,341 932,344 947,342 962,345 975,332 988,340 1001,341 1013,343 1024,338 1035,345 1046,348 1056,344 1065,341 1074,349 1083,360 1091,350 1100,355 1109,351 1118,348 1126,354 1134,358 1140,349 1147,350 1154,347 1162,343 1168,358 1175,352 1181,355 1188,340" stroke="#006400" stroke-width="1" fill="none" shape-rendering="crispEdges"/><polyline points="337,222 478,191 567,272 634,284 682,337 720,309 754,287 788,312 814,318 837,318 858,323 878,310 896,319 915,325 932,336 947,332 962,338 975,338 988,345 1001,353 1013,338 1024,349 1035,345 1046,357 1056,349 1065,334 1074,339 1083,352 1091,350 1100,344 1109,350 1118,356 1126,348 1134,352 1140,350 1147,351 1154,350 1162,346 1168,343 1175,333 1181,349 1188,353" stroke="#ff00ff" stroke-width="1" fill="none" shape-rendering="crispEdges"/><polyline points="337,223 478,191 567,270 634,288 682,344 720,305 754,309 788,329 814,336 837,326 858,316 878,344 896,339 915,337 932,318 947,339 962,335 975,352 988,354 1001,353 1013,353 1024,347 1035,357 1046,351 1056,346 1065,344 1074,354 1083,358 1091,346 1100,328 1109,348 1118,337 1126,361 1134,351 1140,352 1147,351 1154,339 1162,337 1168,347 1175,363 1181,360 1188,359" stroke="#00ffff" stroke-width="1" fill="none" shape-rendering="crispEdges"/><polyline points="337,225 478,194 567,275 634,293 682,324 720,324 754,309 788,316 814,313 837,333 858,340 878,336 896,325 915,338 932,319 947,335 962,350 975,336 988,352 1001,340 1013,339 1024,347 1035,356 1046,352 1056,351 1065,349 1074,343 1083,352 1091,346 1100,340 1109,355 1118,352 1126,355 1134,350 1140,381 1147,357 1154,347 1162,355 1168,363 1175,348 1181,348 1188,362" stroke="#00ff00" stroke-width="1" fill="none" shape-rendering="crispEdges"/><polyline points="337,225 478,191 567,273 634,287 682,351 720,319 754,305 788,331 814,321 837,333 858,338 878,330 896,355 915,336 932,345 947,342 962,346 975,346 988,342 1001,340 1013,354 1024,344 1035,344 1046,340 1056,362 1065,361 1074,342 1083,348 1091,348 1100,356 1109,342 1118,369 1126,344 1134,357 1140,348 1147,344 1154,350 1162,357 1168,350 1175,342 1181,353 1188,349" stroke="#ffff00" stroke-width="1" fill="none" shape-rendering="crispEdges"/><polyline points="337,220 478,190 567,268 634,282 682,320 720,309 754,303 788,305 814,320 837,319 858,335 878,327 896,330 915,332 932,333 947,338 962,332 975,328 988,352 1001,343 1013,334 1024,344 1035,342 1046,344 1056,348 1065,346 1074,355 1083,343 1091,345 1100,352 1109,354 1118,349 1126,352 1134,354 1140,357 1147,347 1154,356 1162,359 1168,342 1175,365 1181,361 1188,362" stroke="#800000" stroke-width="1" fill="none" shape-rendering="crispEdges"/><polyline points="337,222 478,190 567,267 634,282 682,310 720,302 754,300 788,322 814,338 837,331 858,349 878,325 896,324 915,337 932,337 947,345 962,344 975,367 988,342 1001,341 1013,349 1024,349 1035,350 1046,362 1056,364 1065,358 1074,364 1083,355 1091,372 1100,360 1109,364 1118,367 1126,360 1134,358 1140,363 1147,373 1154,364 1162,358 1168,353 1175,366 1181,369 1188,356" stroke="#808080" stroke-width="1" fill="none" shape-rendering="crispEdges"/><polyline points="337,221 478,189 567,266 634,283 682,312 720,326 754,307 788,321 814,327 837,338 858,325 878,336 896,330 915,331 932,341 947,336 962,336 975,341 988,337 1001,342 1013,348 1024,341 1035,357 1046,342 1056,345 1065,343 1074,341 1083,358 1091,348 1100,353 1109,351 1118,354 1126,353 1134,357 1140,355 1147,354 1154,360 1162,354 1168,354 1175,351 1181,348 1188,345" stroke="#000000" stroke-width="1" fill="none" shape-rendering="crispEdges"/><polyline points="337,222 478,188 567,267 634,282 682,310 720,312 754,309 788,321 814,318 837,317 858,325 878,345 896,342 915,333 932,332 947,327 962,326 975,344 988,348 1001,344 1013,335 1024,342 1035,348 1046,350 1056,353 1065,349 1074,341 1083,355 1091,353 1100,350 1109,349 1118,341 1126,350 1134,346 1140,344 1147,358 1154,350 1162,385 1168,360 1175,353 1181,356 1188,357" stroke="#ffc0cb" stroke-width="1" fill="none" shape-rendering="crispEdges"/><polyline points="337,222 478,191 567,269 634,284 682,344 720,318 754,313 788,307 814,336 837,336 858,357 878,333 896,347 915,345 932,351 947,333 962,336 975,338 988,365 1001,360 1013,347 1024,351 1035,357 1046,358 1056,360 1065,358 1074,352 1083,340 1091,352 1100,342 1109,357 1118,367 1126,353 1134,351 1140,356 1147,355 1154,363 1162,358 1168,368 1175,393 1181,361 1188,351" stroke="#ffa500" stroke-width="1" fill="none" shape-rendering="crispEdges"/><polyline points="337,223 478,194 567,274 634,286 682,316 720,324 754,318 788,319 814,328 837,360 858,353 878,339 896,335 915,349 932,343 947,332 962,358 975,359 988,336 1001,369 1013,364 1024,353 1035,376 1046,354 1056,360 1065,362 1074,361 1083,351 1091,352 1100,362 1109,360 1118,356 1126,360 1134,359 1140,356 1147,360 1154,369 1162,362 1168,351 1175,373 1181,365 1188,361" stroke="#ff0000" stroke-width="1" fill="none" shape-rendering="crispEdges"/><polyline points="337,222 478,192 567,272 634,292 682,320 720,314 754,308 788,313 814,313 837,333 858,343 878,345 896,332 915,326 932,332 947,330 962,362 975,347 988,331 1001,347 1013,327 1024,350 1035,351 1046,352 1056,349 1065,350 1074,334 1083,347 1091,350 1100,359 1109,340 1118,362 1126,356 1134,347 1140,345 1147,343 1154,339 1162,345 1168,356 1175,349 1181,359 1188,349" stroke="#0000ff" stroke-width="1" fill="none" shape-rendering="crispEdges"/><polyline points="337,218 478,187 567,264 634,273 682,281 720,303 754,302 788,321 814,330 837,330 858,326 878,336 896,342 915,333 932,331 947,330 962,346 975,344 988,351 1001,323 1013,350 1024,357 1035,349 1046,349 1056,349 1065,349 1074,345 1083,342 1091,359 1100,346 1109,347 1118,348 1126,340 1134,341 1140,350 1147,354 1154,361 1162,359 1168,357 1175,353 1181,357 1188,348" stroke="#006400" stroke-width="1" fill="none" shape-rendering="crispEdges"/><polyline points="337,220 478,188 567,267 634,280 682,328 720,304 754,308 788,326 814,334 837,321 858,317 878,317 896,339 915,320 932,321 947,325 962,334 975,340 988,343 1001,337 1013,340 1024,349 1035,360 1046,340 1056,339 1065,343 1074,358 1083,340 1091,362 1100,339 1109,340 1118,353 1126,341 1134,336 1140,346 1147,348 1154,351 1162,348 1168,344 1175,367 1181,345 1188,350" stroke="#ff00ff" stroke-width="1" fill="none" shape-rendering="crispEdges"/><polyline points="337,221 478,190 567,267 634,276 682,326 720,323 754,298 788,332 814,332 837,320 858,372 878,336 896,335 915,336 932,331 947,363 962,354 975,329 988,349 1001,340 1013,351 1024,338 1035,336 1046,353 1056,349 1065,337 1074,355 1083,359 1091,346 1100,337 1109,352 1118,352 1126,360 1134,354 1140,356 1147,355 1154,351 1162,357 1168,345 1175,346 1181,357 1188,349" stroke="#00ffff" stroke-width="1" fill="none" shape-rendering="crispEdges"/><polyline points="337,222 478,187 567,266 634,284 682,319 720,309 754,320 788,306 814,324 837,327 858,339 878,347 896,334 915,331 932,346 947,347 962,336 975,362 988,339 1001,335 1013,354 1024,363 1035,353 1046,341 1056,354 1065,351 1074,346 1083,367 1091,355 1100,334 1109,347 1118,352 1126,341 1134,354 1140,353 1147,350 1154,348 1162,363 1168,353 1175,344 1181,363 1188,354" stroke="#00ff00" stroke-width="1" fill="none" shape-rendering="crispEdges"/><polyline points="337,221 478,189 567,266 634,282 682,316 720,286 754,302 788,313 814,323 837,324 858,311 878,318 896,320 915,338 932,322 947,346 962,340 975,330 988,333 1001,340 1013,340 1024,332 1035,340 1046,341 1056,331 1065,342 1074,345 1083,355 1091,352 1100,358 1109,354 1118,350 1126,359 1134,343 1140,355 1147,341 1154,331 1162,353 1168,342 1175,338 1181,345 1188,357" stroke="#ffff00" stroke-width="1" fill="none" shape-rendering="crispEdges"/><polyline points="337,224 478,191 567,273 634,289 682,307 720,322 754,306 788,308 814,330 837,331 858,327 878,319 896,319 915,328 932,335 947,319 962,318 975,328 988,338 1001,364 1013,342 1024,345 1035,340 1046,340 1056,346 1065,346 1074,344 1083,346 1091,347 1100,351 1109,348 1118,342 1126,358 1134,350 1140,347 1147,349 1154,382 1162,343 1168,350 1175,353 1181,362 1188,353" stroke="#800000" stroke-width="1" fill="none" shape-rendering="crispEdges"/><polyline points="337,223 478,194 567,275 634,292 682,334 720,332 754,314 788,316 814,328 837,316 858,339 878,337 896,335 915,330 932,330 947,355 962,345 975,342 988,353 1001,354 1013,354 1024,354 1035,366 1046,353 1056,354 1065,352 1074,364 1083,345 1091,360 1100,360 1109,356 1118,350 1126,359 1134,357 1140,353 1147,351 1154,355 1162,358 1168,349 1175,357 1181,348 1188,377" stroke="#808080" stroke-width="1" fill="none" shape-rendering="crispEdges"/><polyline points="337,219 478,187 567,265 634,281 682,333 720,308 754,307 788,304 814,325 837,326 858,319 878,320 896,349 915,338 932,322 947,341 962,331 975,344 988,332 1001,347 1013,342 1024,342 1035,342 1046,348 1056,349 1065,345 1074,342 1083,367 1091,338 1100,353 1109,352 1118,352 1126,348 1134,341 1140,338 1147,348 1154,356 1162,353 1168,340 1175,360 1181,350 1188,357" stroke="#000000" stroke-width="1" fill="none" shape-rendering="crispEdges"/><polyline points="337,218 478,188 567,261 634,274 682,341 720,307 754,304 788,326 814,333 837,321 858,332 878,325 896,333 915,316 932,339 947,337 962,340 975,340 988,336 1001,353 1013,342 1024,336 1035,350 1046,341 1056,358 1065,350 1074,353 1083,350 1091,349 1100,350 1109,349 1118,352 1126,353 1134,356 1140,360 1147,352 1154,342 1162,352 1168,340 1175,350 1181,357 1188,345" stroke="#ffc0cb" stroke-width="1" fill="none" shape-rendering="crispEdges"/><polyline points="337,224 478,192 567,272 634,289 682,324 720,333 754,325 788,338 814,314 837,332 858,331 878,313 896,341 915,336 932,349 947,337 962,345 975,352 988,346 1001,341 1013,355 1024,339 1035,371 1046,355 1056,363 1065,346 1074,365 1083,359 1091,352 1100,346 1109,366 1118,377 1126,355 1134,361 1140,356 1147,358 1154,368 1162,361 1168,359 1175,372 1181,348 1188,348" stroke="#ffa500" stroke-width="1" fill="none" shape-rendering="crispEdges"/><polyline points="337,220 478,190 567,266 634,280 682,331 720,321 754,312 788,317 814,327 837,330 858,334 878,332 896,330 915,323 932,332 947,331 962,340 975,349 988,359 1001,366 1013,340 1024,343 1035,345 1046,353 1056,344 1065,356 1074,343 1083,357 1091,336 1100,345 1109,345 1118,349 1126,346 1134,347 1140,361 1147,361 1154,358 1162,369 1168,340 1175,357 1181,354 1188,354" stroke="#ff0000" stroke-width="1" fill="none" shape-rendering="crispEdges"/><polyline points="337,227 478,193 567,274 634,292 682,332 720,320 754,313 788,334 814,343 837,358 858,345 878,335 896,347 915,344 932,354 947,352 962,346 975,345 988,343 1001,346 1013,351 1024,365 1035,355 1046,369 1056,340 1065,373 1074,358 1083,359 1091,350 1100,354 1109,362 1118,360 1126,354 1134,357 1140,359 1147,374 1154,354 1162,348 1168,343 1175,369 1181,361 1188,386" stroke="#0000ff" stroke-width="1" fill="none" shape-rendering="crispEdges"/><polyline points="337,221 478,189 567,268 634,283 682,303 720,312 754,312 788,329 814,344 837,313 858,329 878,352 896,317 915,346 932,344 947,350 962,328 975,330 988,350 1001,336 1013,343 1024,345 1035,350 1046,352 1056,341 1065,353 1074,354 1083,359 1091,363 1100,373 1109,348 1118,349 1126,355 1134,348 1140,362 1147,355 1154,345 1162,340 1168,359 1175,359 1181,345 1188,348" stroke="#006400" stroke-width="1" fill="none" shape-rendering="crispEdges"/><polyline points="337,224 478,190 567,268 634,284 682,302 720,298 754,304 788,313 814,338 837,342 858,330 878,340 896,330 915,334 932,328 947,333 962,353 975,341 988,361 1001,346 1013,350 1024,339 1035,342 1046,341 1056,347 1065,347 1074,342 1083,349 1091,351 1100,351 1109,343 1118,338 1126,346 1134,344 1140,354 1147,347 1154,347 1162,356 1168,348 1175,353 1181,358 1188,367" stroke="#ff00ff" stroke-width="1" fill="none" shape-rendering="crispEdges"/><polyline points="337,221 478,190 567,269 634,276 682,322 720,316 754,307 788,320 814,319 837,323 858,323 878,317 896,344 915,340 932,356 947,326 962,335 975,355 988,344 1001,338 1013,337 1024,340 1035,360 1046,351 1056,348 1065,351 1074,358 1083,361 1091,357 1100,350 1109,344 1118,350 1126,348 1134,338 1140,345 1147,357 1154,357 1162,354 1168,356 1175,358 1181,345 1188,344" stroke="#00ffff" stroke-width="1" fill="none" shape-rendering="crispEdges"/><polyline points="337,218 478,186 567,260 634,273 682,328 720,295 754,293 788,326 814,310 837,299 858,337 878,334 896,344 915,324 932,333 947,330 962,350 975,340 988,329 1001,331 1013,326 1024,333 1035,333 1046,331 1056,348 1065,346 1074,335 1083,332 1091,344 1100,332 1109,338 1118,333 1126,332 1134,336 1140,347 1147,330 1154,349 1162,345 1168,343 1175,345 1181,345 1188,341" stroke="#00ff00" stroke-width="1" fill="none" shape-rendering="crispEdges"/><polyline points="337,221 478,188 567,266 634,284 682,298 720,298 754,302 788,311 814,319 837,321 858,327 878,323 896,318 915,328 932,325 947,339 962,332 975,336 988,335 1001,334 1013,331 1024,345 1035,348 1046,333 1056,350 1065,343 1074,339 1083,336 1091,347 1100,354 1109,358 1118,350 1126,346 1134,346 1140,356 1147,347 1154,344 1162,344 1168,357 1175,345 1181,346 1188,358" stroke="#ffff00" stroke-width="1" fill="none" shape-rendering="crispEdges"/><polyline points="337,223 478,190 567,271 634,286 682,309 720,303 754,302 788,318 814,309 837,330 858,322 878,329 896,325 915,320 932,324 947,324 962,346 975,330 988,336 1001,336 1013,339 1024,344 1035,322 1046,327 1056,324 1065,330 1074,341 1083,341 1091,349 1100,341 1109,332 1118,335 1126,341 1134,346 1140,344 1147,353 1154,352 1162,342 1168,343 1175,356 1181,360 1188,343" stroke="#800000" stroke-width="1" fill="none" shape-rendering="crispEdges"/><polyline points="337,223 478,191 567,271 634,289 682,297 720,306 754,298 788,290 814,297 837,285 858,298 878,318 896,319 915,323 932,313 947,308 962,314 975,314 988,317 1001,320 1013,311 1024,320 1035,311 1046,319 1056,318 1065,319 1074,328 1083,321 1091,314 1100,323 1109,320 1118,326 1126,313 1134,327 1140,319 1147,321 1154,319 1162,320 1168,326 1175,323 1181,324 1188,325" stroke="#ffff00" stroke-width="1" fill="none" shape-rendering="crispEdges"/><polyline points="337,222 478,193 567,269 634,284 682,321 720,319 754,292 788,278 814,301 837,254 858,295 878,302 896,313 915,308 932,306 947,301 962,317 975,304 988,306 1001,294 1013,305 1024,305 1035,313 1046,311 1056,314 1065,311 1074,294 1083,313 1091,311 1100,313 1109,314 1118,311 1126,320 1134,316 1140,310 1147,321 1154,318 1162,323 1168,306 1175,320 1181,323 1188,309" stroke="#ffa500" stroke-width="1" fill="none" shape-rendering="crispEdges"/><path d="M1188.5 352V423" stroke="#ff0000" stroke-width="1" fill="none" shape-rendering="crispEdges"/><path d="M1188.5 358V421" stroke="#00ff00" stroke-width="1" fill="none" shape-rendering="crispEdges"/><path d="M1188.5 348V426" stroke="#ffc0cb" stroke-width="1" fill="none" shape-rendering="crispEdges"/><path d="M1188.5 354V395" stroke="#ff00ff" stroke-width="1" fill="none" shape-rendering="crispEdges"/><path d="M1188.5 345V426" stroke="#808080" stroke-width="1" fill="none" shape-rendering="crispEdges"/><path d="M1188.5 367V426" stroke="#0000ff" stroke-width="1" fill="none" shape-rendering="crispEdges"/><path d="M1188.5 342V441" stroke="#ffff00" stroke-width="1" fill="none" shape-rendering="crispEdges"/><path d="M1188.5 349V417" stroke="#ffa500" stroke-width="1" fill="none" shape-rendering="crispEdges"/><path d="M1188.5 360V403" stroke="#00ffff" stroke-width="1" fill="none" shape-rendering="crispEdges"/><path d="M1188.5 337V403" stroke="#000000" stroke-width="1" fill="none" shape-rendering="crispEdges"/><path d="M1188.5 360V382" stroke="#006400" stroke-width="1" fill="none" shape-rendering="crispEdges"/><path d="M1188.5 355V393" stroke="#800000" stroke-width="1" fill="none" shape-rendering="crispEdges"/><path d="M1188.5 353V422" stroke="#ff0000" stroke-width="1" fill="none" shape-rendering="crispEdges"/><path d="M1188.5 355V401" stroke="#00ff00" stroke-width="1" fill="none" shape-rendering="crispEdges"/><path d="M1188.5 345V389" stroke="#ffc0cb" stroke-width="1" fill="none" shape-rendering="crispEdges"/><path d="M1188.5 341V405" stroke="#ff00ff" stroke-width="1" fill="none" shape-rendering="crispEdges"/><path d="M1188.5 361V430" stroke="#808080" stroke-width="1" fill="none" shape-rendering="crispEdges"/><path d="M1188.5 360V437" stroke="#0000ff" stroke-width="1" fill="none" shape-rendering="crispEdges"/><path d="M1188.5 357V413" stroke="#ffff00" stroke-width="1" fill="none" shape-rendering="crispEdges"/><path d="M1188.5 345V426" stroke="#ffa500" stroke-width="1" fill="none" shape-rendering="crispEdges"/><path d="M1188.5 359V424" stroke="#00ffff" stroke-width="1" fill="none" shape-rendering="crispEdges"/><path d="M1188.5 345V433" stroke="#000000" stroke-width="1" fill="none" shape-rendering="crispEdges"/><path d="M1188.5 348V402" stroke="#006400" stroke-width="1" fill="none" shape-rendering="crispEdges"/><path d="M1188.5 353V386" stroke="#800000" stroke-width="1" fill="none" shape-rendering="crispEdges"/><path d="M1188.5 354V384" stroke="#ff0000" stroke-width="1" fill="none" shape-rendering="crispEdges"/><path d="M1188.5 341V395" stroke="#00ff00" stroke-width="1" fill="none" shape-rendering="crispEdges"/><path d="M1188 326V459M1189 459V490" stroke="#000" stroke-width="1" fill="none" shape-rendering="crispEdges"/><path d="M1188.5 380V442" stroke="#00ff00" stroke-width="1" fill="none" shape-rendering="crispEdges"/><rect x="311.5" y="171.5" width="967.0" height="325.0" fill="none" stroke="#000" stroke-width="1" shape-rendering="crispEdges"/><path d="M337.5 496V491M337.5 171V175M359.5 496V491M359.5 171V175M378.5 496V491M378.5 171V175M396.5 496V491M396.5 171V175M511.5 496V491M511.5 171V175M579.5 496V491M579.5 171V175M627.5 496V491M627.5 171V175M664.5 496V491M664.5 171V175M694.5 496V491M694.5 171V175M720.5 496V491M720.5 171V175M742.5 496V491M742.5 171V175M761.5 496V491M761.5 171V175M779.5 496V491M779.5 171V175M894.5 496V491M894.5 171V175M962.5 496V491M962.5 171V175M1010.5 496V491M1010.5 171V175M1047.5 496V491M1047.5 171V175M1077.5 496V491M1077.5 171V175M1103.5 496V491M1103.5 171V175M1125.5 496V491M1125.5 171V175M1144.5 496V491M1144.5 171V175M1162.5 496V491M1162.5 171V175M311 482.5H317M1279 482.5H1273M311 472.5H317M1279 472.5H1273M311 465.5H317M1279 465.5H1273M311 459.5H317M1279 459.5H1273M311 453.5H317M1279 453.5H1273M311 449.5H317M1279 449.5H1273M311 445.5H317M1279 445.5H1273M311 441.5H315M1279 441.5H1275M311 418.5H317M1279 418.5H1273M311 404.5H317M1279 404.5H1273M311 395.5H317M1279 395.5H1273M311 387.5H317M1279 387.5H1273M311 381.5H317M1279 381.5H1273M311 376.5H317M1279 376.5H1273M311 371.5H317M1279 371.5H1273M311 367.5H317M1279 367.5H1273M311 364.5H315M1279 364.5H1275M311 340.5H317M1279 340.5H1273M311 327.5H317M1279 327.5H1273M311 317.5H317M1279 317.5H1273M311 309.5H317M1279 309.5H1273M311 303.5H317M1279 303.5H1273M311 298.5H317M1279 298.5H1273M311 293.5H317M1279 293.5H1273M311 289.5H317M1279 289.5H1273M311 286.5H315M1279 286.5H1275M311 262.5H317M1279 262.5H1273M311 249.5H317M1279 249.5H1273M311 239.5H317M1279 239.5H1273M311 232.5H317M1279 232.5H1273M311 225.5H317M1279 225.5H1273M311 220.5H317M1279 220.5H1273M311 216.5H317M1279 216.5H1273M311 212.5H317M1279 212.5H1273M311 208.5H315M1279 208.5H1275M311 185.5H317M1279 185.5H1273" stroke="#000" stroke-width="1" fill="none" shape-rendering="crispEdges"/><rect x="312" y="172" width="166" height="17" fill="#fff"/><path d="M337.5 171.5V175.5M359.5 171.5V175.5M379.5 171.5V175.5M396.5 171.5V175.5" stroke="#000" stroke-width="1" fill="none" shape-rendering="crispEdges"/><text x="321" y="185.8" font-family="Liberation Mono" font-size="14" fill="#000" stroke="#000" stroke-width="0.15">RF_didq (0.001 Hz)</text><text x="304.5" y="211.9" font-family="Liberation Mono" font-size="13.5" text-anchor="end" stroke="#000" stroke-width="0.2">1e+05</text><text x="304.5" y="289.7" font-family="Liberation Mono" font-size="13.5" text-anchor="end" stroke="#000" stroke-width="0.2">1e+04</text><text x="304.5" y="367.4" font-family="Liberation Mono" font-size="13.5" text-anchor="end" stroke="#000" stroke-width="0.2">1000</text><text x="304.5" y="445.2" font-family="Liberation Mono" font-size="13.5" text-anchor="end" stroke="#000" stroke-width="0.2">100</text><text x="396.0" y="511.5" font-family="Liberation Mono" font-size="13.5" text-anchor="middle" stroke="#000" stroke-width="0.2">0.1</text><text x="779.0" y="511.5" font-family="Liberation Mono" font-size="13.5" text-anchor="middle" stroke="#000" stroke-width="0.2">1</text><text x="1162.0" y="511.5" font-family="Liberation Mono" font-size="13.5" text-anchor="middle" stroke="#000" stroke-width="0.2">10</text><text x="1268.5" y="492.4" font-family="Liberation Mono" font-size="13.5" text-anchor="end" stroke="#000" stroke-width="0.2">???</text></svg>
</body></html>
